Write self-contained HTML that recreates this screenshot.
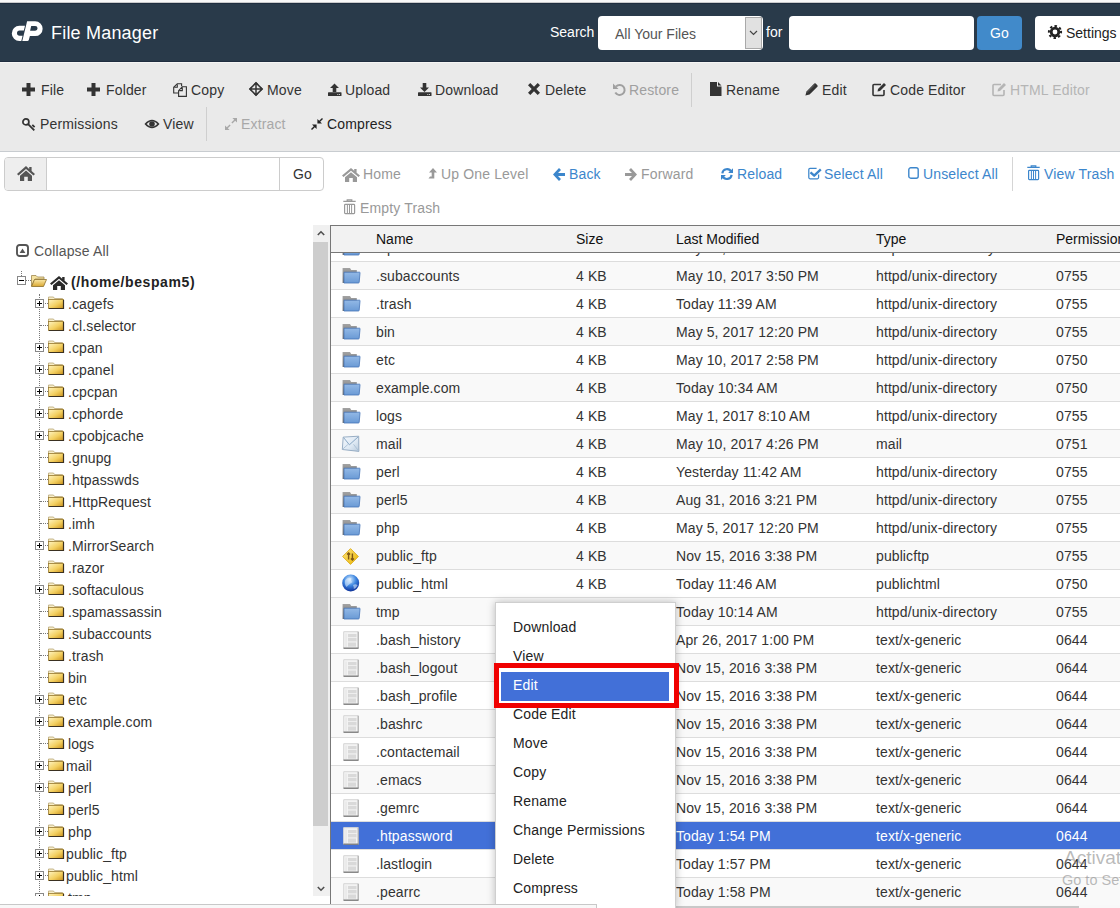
<!DOCTYPE html>
<html><head><meta charset="utf-8"><title>File Manager</title>
<style>
html,body{margin:0;padding:0;}
body{width:1120px;height:908px;overflow:hidden;position:relative;background:#fff;font-family:"Liberation Sans",sans-serif;}
.a{position:absolute;}
.t{position:absolute;white-space:nowrap;}
svg{overflow:visible;}
</style></head><body>
<div class="a" style="left:0px;top:0px;width:1120px;height:2px;background:#f8f8f8;"></div>
<div class="a" style="left:0px;top:2px;width:1120px;height:1px;background:#c9cacc;"></div>
<div class="a" style="left:0px;top:3px;width:1120px;height:59px;background:#293a4a;"></div>
<div class="a" style="left:0px;top:3px;width:1120px;height:1px;background:#1f2d3f;"></div>
<div class="a" style="left:0px;top:61px;width:1120px;height:1px;background:#1f2d3f;"></div>
<div class="a" style="left:0px;top:62px;width:1120px;height:1px;background:#f5f5f4;"></div>
<svg class="a" style="left:0px;top:0px;" width="60" height="60" viewBox="0 0 60 60"><path fill="#fff" d="M25 25.8 L19.4 25.8 A7.6 7.6 0 0 0 19.4 41 L21.3 41 L22.6 35.7 L19.6 35.7 A2.6 2.6 0 0 1 19.6 30.5 L23.85 30.5 Z"/><path fill="#fff" fill-rule="evenodd" d="M22.3 41 L27.1 21.2 L35.2 21.2 A7.45 7.45 0 0 1 35.2 36.1 L29.9 36.1 L28.8 40 Q28.4 41 27.4 41 Z M31.2 26 L35.2 26 A2.35 2.35 0 0 1 35.2 30.7 L30.1 30.7 Z"/></svg>
<div class="t " style="left:51px;top:24.0px;font-size:18px;line-height:18px;color:#fff;font-weight:normal;letter-spacing:0.2px;">File Manager</div>
<div class="t " style="left:550px;top:25.0px;font-size:14px;line-height:14px;color:#fff;font-weight:normal;">Search</div>
<div class="a" style="left:598px;top:16px;width:165px;height:34px;background:#fff;border-radius:4px;"></div>
<div class="t " style="left:615px;top:27.0px;font-size:14px;line-height:14px;color:#555;font-weight:normal;">All Your Files</div>
<div class="a" style="left:745px;top:17px;width:17px;height:32px;background:#e1e1e1;border:1px solid #a9a9a9;box-sizing:border-box;"></div>
<svg class="a" style="left:749px;top:30px;" width="9" height="6" viewBox="0 0 9 6"><path d="M1 1 L4.5 4.5 L8 1" fill="none" stroke="#444" stroke-width="1.2"/></svg>
<div class="t " style="left:766px;top:25.0px;font-size:14px;line-height:14px;color:#fff;font-weight:normal;">for</div>
<div class="a" style="left:789px;top:16px;width:185px;height:34px;background:#fff;border-radius:4px;"></div>
<div class="a" style="left:977px;top:16px;width:45px;height:34px;background:#418aca;border-radius:4px;"></div>
<div class="t " style="left:990px;top:26.0px;font-size:14px;line-height:14px;color:#fff;font-weight:normal;">Go</div>
<div class="a" style="left:1035px;top:16px;width:100px;height:34px;background:#fff;border-radius:4px;"></div>
<svg class="a" style="left:1048px;top:25px;" width="14" height="14" viewBox="0 0 14 14"><circle cx="7" cy="7" r="5.2" fill="#222"/><circle cx="7" cy="7" r="6.1" fill="none" stroke="#222" stroke-width="2" stroke-dasharray="2.4 2.39" transform="rotate(-11 7 7)"/><circle cx="7" cy="7" r="2.4" fill="#fff"/></svg>
<div class="t " style="left:1066px;top:26.0px;font-size:14px;line-height:14px;color:#222;font-weight:normal;">Settings</div>
<div class="a" style="left:0px;top:63px;width:1120px;height:88px;background:#eaeaea;"></div>
<div class="a" style="left:0px;top:151px;width:1120px;height:1px;background:#c8ccd0;"></div>
<svg class="a" style="left:22px;top:83px;" width="13" height="13" viewBox="0 0 13 13"><path d="M4.5 0h4v4.5h4.5v4h-4.5v4.5h-4v-4.5h-4.5v-4h4.5z" fill="#333"/></svg>
<div class="t " style="left:41px;top:83.0px;font-size:14px;line-height:14px;color:#333;font-weight:normal;letter-spacing:0.15px;">File</div>
<svg class="a" style="left:87px;top:83px;" width="13" height="13" viewBox="0 0 13 13"><path d="M4.5 0h4v4.5h4.5v4h-4.5v4.5h-4v-4.5h-4.5v-4h4.5z" fill="#333"/></svg>
<div class="t " style="left:106px;top:83.0px;font-size:14px;line-height:14px;color:#333;font-weight:normal;letter-spacing:0.15px;">Folder</div>
<svg class="a" style="left:173px;top:83px;" width="14" height="14" viewBox="0 0 14 14"><path d="M5.2 10 H0.7 V4.3 L4.3 0.7 H8.6 V3.3 M1.5 4.3 H4.3 V1.5" fill="none" stroke="#333" stroke-width="1.1"/><path d="M5.6 13.4 V7.6 L9.3 3.7 H13.4 V13.4 Z M6.4 7.6 H9.3 V4.5" fill="none" stroke="#333" stroke-width="1.1"/></svg>
<div class="t " style="left:191px;top:83.0px;font-size:14px;line-height:14px;color:#333;font-weight:normal;letter-spacing:0.15px;">Copy</div>
<svg class="a" style="left:249px;top:82px;" width="14" height="14" viewBox="0 0 14 14"><path d="M7 0.9 L13.1 7 L7 13.1 L0.9 7 Z" fill="none" stroke="#333" stroke-width="1.5"/><path d="M7 1 V13 M1 7 H13" stroke="#333" stroke-width="1.5"/><path d="M7 0 L9.6 2.6 H4.4 Z M7 14 L9.6 11.4 H4.4 Z M0 7 L2.6 4.4 V9.6 Z M14 7 L11.4 4.4 V9.6 Z" fill="#333"/></svg>
<div class="t " style="left:267px;top:83.0px;font-size:14px;line-height:14px;color:#333;font-weight:normal;letter-spacing:0.15px;">Move</div>
<svg class="a" style="left:328px;top:83px;" width="13" height="13" viewBox="0 0 13 13"><path d="M6.5 0.5 L11 5 H8.3 V9 H4.7 V5 H2 Z" fill="#333"/><rect x="0" y="9.2" width="13.5" height="3.8" rx="0.6" fill="#333"/><rect x="9.3" y="11" width="1" height="1" fill="#ccc"/><rect x="11" y="11" width="1" height="1" fill="#ccc"/></svg>
<div class="t " style="left:345px;top:83.0px;font-size:14px;line-height:14px;color:#333;font-weight:normal;letter-spacing:0.15px;">Upload</div>
<svg class="a" style="left:418px;top:83px;" width="13" height="13" viewBox="0 0 13 13"><path d="M4.7 0 H8.3 V4.5 H11 L6.5 9 L2 4.5 H4.7 Z" fill="#333"/><rect x="0" y="9.2" width="13.5" height="3.8" rx="0.6" fill="#333"/><rect x="9.3" y="11" width="1" height="1" fill="#ccc"/><rect x="11" y="11" width="1" height="1" fill="#ccc"/></svg>
<div class="t " style="left:435px;top:83.0px;font-size:14px;line-height:14px;color:#333;font-weight:normal;letter-spacing:0.15px;">Download</div>
<svg class="a" style="left:528px;top:83px;" width="12" height="12" viewBox="0 0 12 12"><path d="M2.3 0 L6 3.7 L9.7 0 L12 2.3 L8.3 6 L12 9.7 L9.7 12 L6 8.3 L2.3 12 L0 9.7 L3.7 6 L0 2.3 Z" fill="#333"/></svg>
<div class="t " style="left:545px;top:83.0px;font-size:14px;line-height:14px;color:#333;font-weight:normal;letter-spacing:0.15px;">Delete</div>
<svg class="a" style="left:613px;top:83px;" width="13" height="13" viewBox="0 0 13 13"><path d="M3 3.5 A5 5 0 1 1 2.3 9.5" fill="none" stroke="#a0a0a0" stroke-width="2"/><path d="M0 0.5 V6 H5.5 Z" fill="#a0a0a0"/></svg>
<div class="t " style="left:629px;top:83.0px;font-size:14px;line-height:14px;color:#a0a0a0;font-weight:normal;letter-spacing:0.15px;">Restore</div>
<div class="a" style="left:691px;top:73px;width:1px;height:34px;background:#cfcfcf;"></div>
<svg class="a" style="left:710px;top:82px;" width="12" height="14" viewBox="0 0 12 14"><path d="M0 0 H7 V4.5 H11.5 V14 H0 Z M8 0 L11.5 3.5 H8 Z" fill="#333"/></svg>
<div class="t " style="left:726px;top:83.0px;font-size:14px;line-height:14px;color:#333;font-weight:normal;letter-spacing:0.15px;">Rename</div>
<svg class="a" style="left:805px;top:83px;" width="13" height="13" viewBox="0 0 13 13"><path d="M9.3 0.6 Q10 0 10.7 0.6 L12.4 2.3 Q13 3 12.4 3.7 L4.6 11.5 L0.4 12.6 L1.5 8.4 Z" fill="#333"/><path d="M2.2 9.2 L9.6 1.8" stroke="#888" stroke-width="0.6"/></svg>
<div class="t " style="left:822px;top:83.0px;font-size:14px;line-height:14px;color:#333;font-weight:normal;letter-spacing:0.15px;">Edit</div>
<svg class="a" style="left:872px;top:83px;" width="14" height="13" viewBox="0 0 14 13"><path d="M9 1.5 H2 Q1 1.5 1 2.5 V11.5 Q1 12.5 2 12.5 H11 Q12 12.5 12 11.5 V7" fill="none" stroke="#333" stroke-width="1.6"/><path d="M12 0 L14 2 L8 8 L5.5 8.5 L6 6 Z" fill="#333"/></svg>
<div class="t " style="left:890px;top:83.0px;font-size:14px;line-height:14px;color:#333;font-weight:normal;letter-spacing:0.15px;">Code Editor</div>
<svg class="a" style="left:992px;top:83px;" width="14" height="13" viewBox="0 0 14 13"><path d="M9 1.5 H2 Q1 1.5 1 2.5 V11.5 Q1 12.5 2 12.5 H11 Q12 12.5 12 11.5 V7" fill="none" stroke="#b5b5b5" stroke-width="1.6"/><path d="M12 0 L14 2 L8 8 L5.5 8.5 L6 6 Z" fill="#b5b5b5"/></svg>
<div class="t " style="left:1010px;top:83.0px;font-size:14px;line-height:14px;color:#b5b5b5;font-weight:normal;letter-spacing:0.15px;">HTML Editor</div>
<svg class="a" style="left:22px;top:118px;" width="14" height="14" viewBox="0 0 14 14"><circle cx="3.9" cy="3.9" r="3" fill="none" stroke="#333" stroke-width="1.7"/><path d="M6.1 6.1 L12.3 12.3 M10.3 6.8 L12.6 9.1" stroke="#333" stroke-width="1.8" fill="none"/><circle cx="3.4" cy="4.4" r="0.9" fill="#fff"/></svg>
<div class="t " style="left:40px;top:117.0px;font-size:14px;line-height:14px;color:#333;font-weight:normal;letter-spacing:0.15px;">Permissions</div>
<svg class="a" style="left:145px;top:119px;" width="14" height="10" viewBox="0 0 14 10"><path d="M0.5 5 Q7 -2 13.5 5 Q7 12 0.5 5 Z" fill="none" stroke="#333" stroke-width="1.5"/><circle cx="7" cy="5" r="2.8" fill="#333"/></svg>
<div class="t " style="left:163px;top:117.0px;font-size:14px;line-height:14px;color:#333;font-weight:normal;letter-spacing:0.15px;">View</div>
<div class="a" style="left:206px;top:107px;width:1px;height:34px;background:#cfcfcf;"></div>
<svg class="a" style="left:225px;top:118px;" width="12" height="12" viewBox="0 0 12 12"><path d="M12 0 V4.6 L10.2 2.8 L7.4 5.6 L6.4 4.6 L9.2 1.8 L7.4 0 Z M0 12 V7.4 L1.8 9.2 L4.6 6.4 L5.6 7.4 L2.8 10.2 L4.6 12 Z" fill="#a8a8a8"/></svg>
<div class="t " style="left:241px;top:117.0px;font-size:14px;line-height:14px;color:#a8a8a8;font-weight:normal;letter-spacing:0.15px;">Extract</div>
<svg class="a" style="left:311px;top:118px;" width="12" height="12" viewBox="0 0 12 12"><path d="M11 0 L12 1 L9.2 3.8 L11 5.6 H6.4 V1 L8.2 2.8 Z M1 12 L0 11 L2.8 8.2 L1 6.4 H5.6 V11 L3.8 9.2 Z" fill="#222"/></svg>
<div class="t " style="left:327px;top:117.0px;font-size:14px;line-height:14px;color:#222;font-weight:normal;letter-spacing:0.15px;">Compress</div>
<div class="a" style="left:4px;top:157px;width:320px;height:34px;background:#fff;border:1px solid #ccc;border-radius:4px;box-sizing:border-box;"></div>
<div class="a" style="left:5px;top:158px;width:42px;height:32px;background:#eee;border-radius:3px 0 0 3px;"></div>
<div class="a" style="left:46px;top:158px;width:1px;height:32px;background:#ccc;"></div>
<svg class="a" style="left:17px;top:166px;" width="18" height="15" viewBox="0 0 18 15"><path d="M9 0 L0 8 L1.5 9.6 L9 3 L16.5 9.6 L18 8 L14.6 5 V1 H12.2 V2.9 Z" fill="#555"/><path d="M3 9.8 L9 4.5 L15 9.8 V15 H10.8 V10.8 H7.2 V15 H3 Z" fill="#555"/></svg>
<div class="a" style="left:279px;top:158px;width:1px;height:32px;background:#ccc;"></div>
<div class="t " style="left:293px;top:167.0px;font-size:14px;line-height:14px;color:#333;font-weight:normal;">Go</div>
<svg class="a" style="left:342px;top:168px" width="18" height="14" viewBox="0 0 18 15" preserveAspectRatio="none"><path d="M9 0 L0 8 L1.5 9.6 L9 3 L16.5 9.6 L18 8 L14.6 5 V1 H12.2 V2.9 Z" fill="#999"/><path d="M3 9.8 L9 4.5 L15 9.8 V15 H10.8 V10.8 H7.2 V15 H3 Z" fill="#999"/></svg>
<div class="t " style="left:363px;top:167.0px;font-size:14px;line-height:14px;color:#999;font-weight:normal;letter-spacing:0.15px;">Home</div>
<svg class="a" style="left:428px;top:168px;" width="10" height="11" viewBox="0 0 10 11"><path d="M5 0 L9 4.5 H6.3 V10.5 H0.5 L2 8.5 H3.7 V4.5 H1 Z" fill="#999"/></svg>
<div class="t " style="left:441px;top:167.0px;font-size:14px;line-height:14px;color:#999;font-weight:normal;letter-spacing:0.15px;">Up One Level</div>
<svg class="a" style="left:553px;top:168px;" width="12" height="13" viewBox="0 0 12 13"><path d="M6 0 L8 2 L5 5 H12 V8 H5 L8 11 L6 13 L0 6.5 Z" fill="#3c86cc"/></svg>
<div class="t " style="left:569px;top:167.0px;font-size:14px;line-height:14px;color:#3c86cc;font-weight:normal;letter-spacing:0.15px;">Back</div>
<svg class="a" style="left:625px;top:168px;" width="12" height="13" viewBox="0 0 12 13"><path d="M6 0 L4 2 L7 5 H0 V8 H7 L4 11 L6 13 L12 6.5 Z" fill="#999"/></svg>
<div class="t " style="left:641px;top:167.0px;font-size:14px;line-height:14px;color:#999;font-weight:normal;letter-spacing:0.15px;">Forward</div>
<svg class="a" style="left:720px;top:167px;" width="14" height="14" viewBox="0 0 14 14"><path d="M2.3 6.4 A4.7 4.7 0 0 1 11.2 4.8" fill="none" stroke="#3c86cc" stroke-width="2.1"/><polygon points="13,1.2 13,6.1 8.2,6.1" fill="#3c86cc"/><path d="M11.6 7.8 A4.7 4.7 0 0 1 2.7 9.3" fill="none" stroke="#3c86cc" stroke-width="2.1"/><polygon points="1,13 1,8.1 5.8,8.1" fill="#3c86cc"/></svg>
<div class="t " style="left:737px;top:167.0px;font-size:14px;line-height:14px;color:#3c86cc;font-weight:normal;letter-spacing:0.15px;">Reload</div>
<svg class="a" style="left:808px;top:167px;" width="14" height="13" viewBox="0 0 14 13"><path d="M8.6 1.4 H2 Q0.8 1.4 0.8 2.6 V10.6 Q0.8 11.8 2 11.8 H9.4 Q10.6 11.8 10.6 10.6 V7.6" fill="none" stroke="#3c86cc" stroke-width="1.25"/><path d="M2.5 5.3 L6.2 8.7 L12.8 2.3" fill="none" stroke="#3c86cc" stroke-width="2.3" stroke-linejoin="round"/></svg>
<div class="t " style="left:824px;top:167.0px;font-size:14px;line-height:14px;color:#3c86cc;font-weight:normal;letter-spacing:0.15px;">Select All</div>
<svg class="a" style="left:908px;top:167px;" width="11" height="12" viewBox="0 0 11 12"><rect x="0.8" y="0.8" width="9.4" height="10.4" rx="2" fill="none" stroke="#3c86cc" stroke-width="1.4"/></svg>
<div class="t " style="left:923px;top:167.0px;font-size:14px;line-height:14px;color:#3c86cc;font-weight:normal;letter-spacing:0.15px;">Unselect All</div>
<div class="a" style="left:1012px;top:157px;width:1px;height:34px;background:#d5d5d5;"></div>
<svg class="a" style="left:1027px;top:165px;" width="13" height="15" viewBox="0 0 13 15"><path d="M0.3 2.4 H12.7 M4.2 2.2 V0.8 H8.8 V2.2" fill="none" stroke="#3c86cc" stroke-width="1.2"/><rect x="1.6" y="5.4" width="10" height="9.2" rx="0.8" fill="none" stroke="#3c86cc" stroke-width="1.2"/><path d="M4.4 6 V14 M6.5 6 V14 M8.6 6 V14" stroke="#3c86cc" stroke-width="1"/></svg>
<div class="t " style="left:1044px;top:167.0px;font-size:14px;line-height:14px;color:#3c86cc;font-weight:normal;letter-spacing:0.15px;">View Trash</div>
<svg class="a" style="left:343px;top:199px;" width="13" height="15" viewBox="0 0 13 15"><path d="M0.3 2.4 H12.7 M4.2 2.2 V0.8 H8.8 V2.2" fill="none" stroke="#999" stroke-width="1.2"/><rect x="1.6" y="5.4" width="10" height="9.2" rx="0.8" fill="none" stroke="#999" stroke-width="1.2"/><path d="M4.4 6 V14 M6.5 6 V14 M8.6 6 V14" stroke="#999" stroke-width="1"/></svg>
<div class="t " style="left:360px;top:201.0px;font-size:14px;line-height:14px;color:#999;font-weight:normal;letter-spacing:0.15px;">Empty Trash</div>
<div class="t " style="left:34px;top:244.0px;font-size:14px;line-height:14px;color:#555;font-weight:normal;letter-spacing:0.15px;">Collapse All</div>
<svg class="a" style="left:16px;top:244px;" width="13" height="13" viewBox="0 0 13 13"><rect x="1" y="1" width="11" height="11" rx="2.6" fill="none" stroke="#555" stroke-width="1.9"/><path d="M3.6 9 H9.4 L6.5 4.6 Z" fill="#555"/></svg>
<svg class="a" style="left:17px;top:276px;" width="9" height="9" viewBox="0 0 9 9"><rect x="0.5" y="0.5" width="8" height="8" fill="#fff" stroke="#888"/><path d="M2 4.5 H7" stroke="#000"/></svg>
<div class="a" style="left:21px;top:271px;width:1px;height:5px;border-left:1px dotted #777;"></div>
<div class="a" style="left:26px;top:280px;width:5px;height:1px;border-top:1px dotted #777;"></div>
<svg class="a" style="left:31px;top:274px;" width="16" height="13" viewBox="0 0 16 13"><defs><linearGradient id="fo" x1="0" y1="0" x2="0" y2="1"><stop offset="0" stop-color="#fbe9a8"/><stop offset="1" stop-color="#d9a730"/></linearGradient></defs><path d="M0.5 1.5 H5 L6.5 3 H13 V5 H4 L0.5 12 Z" fill="#f5e2a0" stroke="#a08850" stroke-width="0.8"/><path d="M3.5 5.5 H15.5 L12.5 12.5 H0.5 Z" fill="url(#fo)" stroke="#8a6d2a" stroke-width="0.8"/></svg>
<svg class="a" style="left:50px;top:276px" width="18" height="14" viewBox="0 0 18 15" preserveAspectRatio="none"><path d="M9 0 L0 8 L1.5 9.6 L9 3 L16.5 9.6 L18 8 L14.6 5 V1 H12.2 V2.9 Z" fill="#2a2a2a"/><path d="M3 9.8 L9 4.5 L15 9.8 V15 H10.8 V10.8 H7.2 V15 H3 Z" fill="#2a2a2a"/></svg>
<div class="t " style="left:71px;top:275.0px;font-size:14px;line-height:14px;color:#222;font-weight:bold;letter-spacing:0.6px;">(/home/bespam5)</div>
<div class="a" style="left:39px;top:294px;width:1px;height:602px;border-left:1px dotted #777;"></div>
<div class="a" style="left:40px;top:303px;width:8px;height:1px;border-top:1px dotted #777;"></div>
<svg class="a" style="left:35px;top:299px;" width="9" height="9" viewBox="0 0 9 9"><rect x="0.5" y="0.5" width="8" height="8" fill="#fff" stroke="#888"/><path d="M2 4.5 H7 M4.5 2 V7" stroke="#000"/></svg>
<svg class="a" style="left:48px;top:296px;" width="16" height="13" viewBox="0 0 16 13"><defs><linearGradient id="fy" x1="0" y1="0" x2="1" y2="1"><stop offset="0" stop-color="#fff4c0"/><stop offset="0.55" stop-color="#f3cf5f"/><stop offset="1" stop-color="#c9901c"/></linearGradient></defs><path d="M0.5 1 H5.5 L6.5 2.5 H14.5 V4 H0.5 Z" fill="#f6edc8" stroke="#b9a676" stroke-width="0.8"/><rect x="0.5" y="3.5" width="15" height="9" fill="url(#fy)" stroke="#9a7a30" stroke-width="0.8"/><path d="M1 12.5 H15.5 V4" fill="none" stroke="#3a3020" stroke-width="1.2"/></svg>
<div class="t " style="left:68px;top:297.0px;font-size:14px;line-height:14px;color:#333;font-weight:normal;letter-spacing:0.1px;">.cagefs</div>
<div class="a" style="left:40px;top:325px;width:8px;height:1px;border-top:1px dotted #777;"></div>
<svg class="a" style="left:48px;top:318px;" width="16" height="13" viewBox="0 0 16 13"><defs><linearGradient id="fy" x1="0" y1="0" x2="1" y2="1"><stop offset="0" stop-color="#fff4c0"/><stop offset="0.55" stop-color="#f3cf5f"/><stop offset="1" stop-color="#c9901c"/></linearGradient></defs><path d="M0.5 1 H5.5 L6.5 2.5 H14.5 V4 H0.5 Z" fill="#f6edc8" stroke="#b9a676" stroke-width="0.8"/><rect x="0.5" y="3.5" width="15" height="9" fill="url(#fy)" stroke="#9a7a30" stroke-width="0.8"/><path d="M1 12.5 H15.5 V4" fill="none" stroke="#3a3020" stroke-width="1.2"/></svg>
<div class="t " style="left:68px;top:319.0px;font-size:14px;line-height:14px;color:#333;font-weight:normal;letter-spacing:0.1px;">.cl.selector</div>
<div class="a" style="left:40px;top:347px;width:8px;height:1px;border-top:1px dotted #777;"></div>
<svg class="a" style="left:35px;top:343px;" width="9" height="9" viewBox="0 0 9 9"><rect x="0.5" y="0.5" width="8" height="8" fill="#fff" stroke="#888"/><path d="M2 4.5 H7 M4.5 2 V7" stroke="#000"/></svg>
<svg class="a" style="left:48px;top:340px;" width="16" height="13" viewBox="0 0 16 13"><defs><linearGradient id="fy" x1="0" y1="0" x2="1" y2="1"><stop offset="0" stop-color="#fff4c0"/><stop offset="0.55" stop-color="#f3cf5f"/><stop offset="1" stop-color="#c9901c"/></linearGradient></defs><path d="M0.5 1 H5.5 L6.5 2.5 H14.5 V4 H0.5 Z" fill="#f6edc8" stroke="#b9a676" stroke-width="0.8"/><rect x="0.5" y="3.5" width="15" height="9" fill="url(#fy)" stroke="#9a7a30" stroke-width="0.8"/><path d="M1 12.5 H15.5 V4" fill="none" stroke="#3a3020" stroke-width="1.2"/></svg>
<div class="t " style="left:68px;top:341.0px;font-size:14px;line-height:14px;color:#333;font-weight:normal;letter-spacing:0.1px;">.cpan</div>
<div class="a" style="left:40px;top:369px;width:8px;height:1px;border-top:1px dotted #777;"></div>
<svg class="a" style="left:35px;top:365px;" width="9" height="9" viewBox="0 0 9 9"><rect x="0.5" y="0.5" width="8" height="8" fill="#fff" stroke="#888"/><path d="M2 4.5 H7 M4.5 2 V7" stroke="#000"/></svg>
<svg class="a" style="left:48px;top:362px;" width="16" height="13" viewBox="0 0 16 13"><defs><linearGradient id="fy" x1="0" y1="0" x2="1" y2="1"><stop offset="0" stop-color="#fff4c0"/><stop offset="0.55" stop-color="#f3cf5f"/><stop offset="1" stop-color="#c9901c"/></linearGradient></defs><path d="M0.5 1 H5.5 L6.5 2.5 H14.5 V4 H0.5 Z" fill="#f6edc8" stroke="#b9a676" stroke-width="0.8"/><rect x="0.5" y="3.5" width="15" height="9" fill="url(#fy)" stroke="#9a7a30" stroke-width="0.8"/><path d="M1 12.5 H15.5 V4" fill="none" stroke="#3a3020" stroke-width="1.2"/></svg>
<div class="t " style="left:68px;top:363.0px;font-size:14px;line-height:14px;color:#333;font-weight:normal;letter-spacing:0.1px;">.cpanel</div>
<div class="a" style="left:40px;top:391px;width:8px;height:1px;border-top:1px dotted #777;"></div>
<svg class="a" style="left:35px;top:387px;" width="9" height="9" viewBox="0 0 9 9"><rect x="0.5" y="0.5" width="8" height="8" fill="#fff" stroke="#888"/><path d="M2 4.5 H7 M4.5 2 V7" stroke="#000"/></svg>
<svg class="a" style="left:48px;top:384px;" width="16" height="13" viewBox="0 0 16 13"><defs><linearGradient id="fy" x1="0" y1="0" x2="1" y2="1"><stop offset="0" stop-color="#fff4c0"/><stop offset="0.55" stop-color="#f3cf5f"/><stop offset="1" stop-color="#c9901c"/></linearGradient></defs><path d="M0.5 1 H5.5 L6.5 2.5 H14.5 V4 H0.5 Z" fill="#f6edc8" stroke="#b9a676" stroke-width="0.8"/><rect x="0.5" y="3.5" width="15" height="9" fill="url(#fy)" stroke="#9a7a30" stroke-width="0.8"/><path d="M1 12.5 H15.5 V4" fill="none" stroke="#3a3020" stroke-width="1.2"/></svg>
<div class="t " style="left:68px;top:385.0px;font-size:14px;line-height:14px;color:#333;font-weight:normal;letter-spacing:0.1px;">.cpcpan</div>
<div class="a" style="left:40px;top:413px;width:8px;height:1px;border-top:1px dotted #777;"></div>
<svg class="a" style="left:35px;top:409px;" width="9" height="9" viewBox="0 0 9 9"><rect x="0.5" y="0.5" width="8" height="8" fill="#fff" stroke="#888"/><path d="M2 4.5 H7 M4.5 2 V7" stroke="#000"/></svg>
<svg class="a" style="left:48px;top:406px;" width="16" height="13" viewBox="0 0 16 13"><defs><linearGradient id="fy" x1="0" y1="0" x2="1" y2="1"><stop offset="0" stop-color="#fff4c0"/><stop offset="0.55" stop-color="#f3cf5f"/><stop offset="1" stop-color="#c9901c"/></linearGradient></defs><path d="M0.5 1 H5.5 L6.5 2.5 H14.5 V4 H0.5 Z" fill="#f6edc8" stroke="#b9a676" stroke-width="0.8"/><rect x="0.5" y="3.5" width="15" height="9" fill="url(#fy)" stroke="#9a7a30" stroke-width="0.8"/><path d="M1 12.5 H15.5 V4" fill="none" stroke="#3a3020" stroke-width="1.2"/></svg>
<div class="t " style="left:68px;top:407.0px;font-size:14px;line-height:14px;color:#333;font-weight:normal;letter-spacing:0.1px;">.cphorde</div>
<div class="a" style="left:40px;top:435px;width:8px;height:1px;border-top:1px dotted #777;"></div>
<svg class="a" style="left:35px;top:431px;" width="9" height="9" viewBox="0 0 9 9"><rect x="0.5" y="0.5" width="8" height="8" fill="#fff" stroke="#888"/><path d="M2 4.5 H7 M4.5 2 V7" stroke="#000"/></svg>
<svg class="a" style="left:48px;top:428px;" width="16" height="13" viewBox="0 0 16 13"><defs><linearGradient id="fy" x1="0" y1="0" x2="1" y2="1"><stop offset="0" stop-color="#fff4c0"/><stop offset="0.55" stop-color="#f3cf5f"/><stop offset="1" stop-color="#c9901c"/></linearGradient></defs><path d="M0.5 1 H5.5 L6.5 2.5 H14.5 V4 H0.5 Z" fill="#f6edc8" stroke="#b9a676" stroke-width="0.8"/><rect x="0.5" y="3.5" width="15" height="9" fill="url(#fy)" stroke="#9a7a30" stroke-width="0.8"/><path d="M1 12.5 H15.5 V4" fill="none" stroke="#3a3020" stroke-width="1.2"/></svg>
<div class="t " style="left:68px;top:429.0px;font-size:14px;line-height:14px;color:#333;font-weight:normal;letter-spacing:0.1px;">.cpobjcache</div>
<div class="a" style="left:40px;top:457px;width:8px;height:1px;border-top:1px dotted #777;"></div>
<svg class="a" style="left:48px;top:450px;" width="16" height="13" viewBox="0 0 16 13"><defs><linearGradient id="fy" x1="0" y1="0" x2="1" y2="1"><stop offset="0" stop-color="#fff4c0"/><stop offset="0.55" stop-color="#f3cf5f"/><stop offset="1" stop-color="#c9901c"/></linearGradient></defs><path d="M0.5 1 H5.5 L6.5 2.5 H14.5 V4 H0.5 Z" fill="#f6edc8" stroke="#b9a676" stroke-width="0.8"/><rect x="0.5" y="3.5" width="15" height="9" fill="url(#fy)" stroke="#9a7a30" stroke-width="0.8"/><path d="M1 12.5 H15.5 V4" fill="none" stroke="#3a3020" stroke-width="1.2"/></svg>
<div class="t " style="left:68px;top:451.0px;font-size:14px;line-height:14px;color:#333;font-weight:normal;letter-spacing:0.1px;">.gnupg</div>
<div class="a" style="left:40px;top:479px;width:8px;height:1px;border-top:1px dotted #777;"></div>
<svg class="a" style="left:48px;top:472px;" width="16" height="13" viewBox="0 0 16 13"><defs><linearGradient id="fy" x1="0" y1="0" x2="1" y2="1"><stop offset="0" stop-color="#fff4c0"/><stop offset="0.55" stop-color="#f3cf5f"/><stop offset="1" stop-color="#c9901c"/></linearGradient></defs><path d="M0.5 1 H5.5 L6.5 2.5 H14.5 V4 H0.5 Z" fill="#f6edc8" stroke="#b9a676" stroke-width="0.8"/><rect x="0.5" y="3.5" width="15" height="9" fill="url(#fy)" stroke="#9a7a30" stroke-width="0.8"/><path d="M1 12.5 H15.5 V4" fill="none" stroke="#3a3020" stroke-width="1.2"/></svg>
<div class="t " style="left:68px;top:473.0px;font-size:14px;line-height:14px;color:#333;font-weight:normal;letter-spacing:0.1px;">.htpasswds</div>
<div class="a" style="left:40px;top:501px;width:8px;height:1px;border-top:1px dotted #777;"></div>
<svg class="a" style="left:48px;top:494px;" width="16" height="13" viewBox="0 0 16 13"><defs><linearGradient id="fy" x1="0" y1="0" x2="1" y2="1"><stop offset="0" stop-color="#fff4c0"/><stop offset="0.55" stop-color="#f3cf5f"/><stop offset="1" stop-color="#c9901c"/></linearGradient></defs><path d="M0.5 1 H5.5 L6.5 2.5 H14.5 V4 H0.5 Z" fill="#f6edc8" stroke="#b9a676" stroke-width="0.8"/><rect x="0.5" y="3.5" width="15" height="9" fill="url(#fy)" stroke="#9a7a30" stroke-width="0.8"/><path d="M1 12.5 H15.5 V4" fill="none" stroke="#3a3020" stroke-width="1.2"/></svg>
<div class="t " style="left:68px;top:495.0px;font-size:14px;line-height:14px;color:#333;font-weight:normal;letter-spacing:0.1px;">.HttpRequest</div>
<div class="a" style="left:40px;top:523px;width:8px;height:1px;border-top:1px dotted #777;"></div>
<svg class="a" style="left:48px;top:516px;" width="16" height="13" viewBox="0 0 16 13"><defs><linearGradient id="fy" x1="0" y1="0" x2="1" y2="1"><stop offset="0" stop-color="#fff4c0"/><stop offset="0.55" stop-color="#f3cf5f"/><stop offset="1" stop-color="#c9901c"/></linearGradient></defs><path d="M0.5 1 H5.5 L6.5 2.5 H14.5 V4 H0.5 Z" fill="#f6edc8" stroke="#b9a676" stroke-width="0.8"/><rect x="0.5" y="3.5" width="15" height="9" fill="url(#fy)" stroke="#9a7a30" stroke-width="0.8"/><path d="M1 12.5 H15.5 V4" fill="none" stroke="#3a3020" stroke-width="1.2"/></svg>
<div class="t " style="left:68px;top:517.0px;font-size:14px;line-height:14px;color:#333;font-weight:normal;letter-spacing:0.1px;">.imh</div>
<div class="a" style="left:40px;top:545px;width:8px;height:1px;border-top:1px dotted #777;"></div>
<svg class="a" style="left:35px;top:541px;" width="9" height="9" viewBox="0 0 9 9"><rect x="0.5" y="0.5" width="8" height="8" fill="#fff" stroke="#888"/><path d="M2 4.5 H7 M4.5 2 V7" stroke="#000"/></svg>
<svg class="a" style="left:48px;top:538px;" width="16" height="13" viewBox="0 0 16 13"><defs><linearGradient id="fy" x1="0" y1="0" x2="1" y2="1"><stop offset="0" stop-color="#fff4c0"/><stop offset="0.55" stop-color="#f3cf5f"/><stop offset="1" stop-color="#c9901c"/></linearGradient></defs><path d="M0.5 1 H5.5 L6.5 2.5 H14.5 V4 H0.5 Z" fill="#f6edc8" stroke="#b9a676" stroke-width="0.8"/><rect x="0.5" y="3.5" width="15" height="9" fill="url(#fy)" stroke="#9a7a30" stroke-width="0.8"/><path d="M1 12.5 H15.5 V4" fill="none" stroke="#3a3020" stroke-width="1.2"/></svg>
<div class="t " style="left:68px;top:539.0px;font-size:14px;line-height:14px;color:#333;font-weight:normal;letter-spacing:0.1px;">.MirrorSearch</div>
<div class="a" style="left:40px;top:567px;width:8px;height:1px;border-top:1px dotted #777;"></div>
<svg class="a" style="left:48px;top:560px;" width="16" height="13" viewBox="0 0 16 13"><defs><linearGradient id="fy" x1="0" y1="0" x2="1" y2="1"><stop offset="0" stop-color="#fff4c0"/><stop offset="0.55" stop-color="#f3cf5f"/><stop offset="1" stop-color="#c9901c"/></linearGradient></defs><path d="M0.5 1 H5.5 L6.5 2.5 H14.5 V4 H0.5 Z" fill="#f6edc8" stroke="#b9a676" stroke-width="0.8"/><rect x="0.5" y="3.5" width="15" height="9" fill="url(#fy)" stroke="#9a7a30" stroke-width="0.8"/><path d="M1 12.5 H15.5 V4" fill="none" stroke="#3a3020" stroke-width="1.2"/></svg>
<div class="t " style="left:68px;top:561.0px;font-size:14px;line-height:14px;color:#333;font-weight:normal;letter-spacing:0.1px;">.razor</div>
<div class="a" style="left:40px;top:589px;width:8px;height:1px;border-top:1px dotted #777;"></div>
<svg class="a" style="left:35px;top:585px;" width="9" height="9" viewBox="0 0 9 9"><rect x="0.5" y="0.5" width="8" height="8" fill="#fff" stroke="#888"/><path d="M2 4.5 H7 M4.5 2 V7" stroke="#000"/></svg>
<svg class="a" style="left:48px;top:582px;" width="16" height="13" viewBox="0 0 16 13"><defs><linearGradient id="fy" x1="0" y1="0" x2="1" y2="1"><stop offset="0" stop-color="#fff4c0"/><stop offset="0.55" stop-color="#f3cf5f"/><stop offset="1" stop-color="#c9901c"/></linearGradient></defs><path d="M0.5 1 H5.5 L6.5 2.5 H14.5 V4 H0.5 Z" fill="#f6edc8" stroke="#b9a676" stroke-width="0.8"/><rect x="0.5" y="3.5" width="15" height="9" fill="url(#fy)" stroke="#9a7a30" stroke-width="0.8"/><path d="M1 12.5 H15.5 V4" fill="none" stroke="#3a3020" stroke-width="1.2"/></svg>
<div class="t " style="left:68px;top:583.0px;font-size:14px;line-height:14px;color:#333;font-weight:normal;letter-spacing:0.1px;">.softaculous</div>
<div class="a" style="left:40px;top:611px;width:8px;height:1px;border-top:1px dotted #777;"></div>
<svg class="a" style="left:48px;top:604px;" width="16" height="13" viewBox="0 0 16 13"><defs><linearGradient id="fy" x1="0" y1="0" x2="1" y2="1"><stop offset="0" stop-color="#fff4c0"/><stop offset="0.55" stop-color="#f3cf5f"/><stop offset="1" stop-color="#c9901c"/></linearGradient></defs><path d="M0.5 1 H5.5 L6.5 2.5 H14.5 V4 H0.5 Z" fill="#f6edc8" stroke="#b9a676" stroke-width="0.8"/><rect x="0.5" y="3.5" width="15" height="9" fill="url(#fy)" stroke="#9a7a30" stroke-width="0.8"/><path d="M1 12.5 H15.5 V4" fill="none" stroke="#3a3020" stroke-width="1.2"/></svg>
<div class="t " style="left:68px;top:605.0px;font-size:14px;line-height:14px;color:#333;font-weight:normal;letter-spacing:0.1px;">.spamassassin</div>
<div class="a" style="left:40px;top:633px;width:8px;height:1px;border-top:1px dotted #777;"></div>
<svg class="a" style="left:48px;top:626px;" width="16" height="13" viewBox="0 0 16 13"><defs><linearGradient id="fy" x1="0" y1="0" x2="1" y2="1"><stop offset="0" stop-color="#fff4c0"/><stop offset="0.55" stop-color="#f3cf5f"/><stop offset="1" stop-color="#c9901c"/></linearGradient></defs><path d="M0.5 1 H5.5 L6.5 2.5 H14.5 V4 H0.5 Z" fill="#f6edc8" stroke="#b9a676" stroke-width="0.8"/><rect x="0.5" y="3.5" width="15" height="9" fill="url(#fy)" stroke="#9a7a30" stroke-width="0.8"/><path d="M1 12.5 H15.5 V4" fill="none" stroke="#3a3020" stroke-width="1.2"/></svg>
<div class="t " style="left:68px;top:627.0px;font-size:14px;line-height:14px;color:#333;font-weight:normal;letter-spacing:0.1px;">.subaccounts</div>
<div class="a" style="left:40px;top:655px;width:8px;height:1px;border-top:1px dotted #777;"></div>
<svg class="a" style="left:48px;top:648px;" width="16" height="13" viewBox="0 0 16 13"><defs><linearGradient id="fy" x1="0" y1="0" x2="1" y2="1"><stop offset="0" stop-color="#fff4c0"/><stop offset="0.55" stop-color="#f3cf5f"/><stop offset="1" stop-color="#c9901c"/></linearGradient></defs><path d="M0.5 1 H5.5 L6.5 2.5 H14.5 V4 H0.5 Z" fill="#f6edc8" stroke="#b9a676" stroke-width="0.8"/><rect x="0.5" y="3.5" width="15" height="9" fill="url(#fy)" stroke="#9a7a30" stroke-width="0.8"/><path d="M1 12.5 H15.5 V4" fill="none" stroke="#3a3020" stroke-width="1.2"/></svg>
<div class="t " style="left:68px;top:649.0px;font-size:14px;line-height:14px;color:#333;font-weight:normal;letter-spacing:0.1px;">.trash</div>
<div class="a" style="left:40px;top:677px;width:8px;height:1px;border-top:1px dotted #777;"></div>
<svg class="a" style="left:48px;top:670px;" width="16" height="13" viewBox="0 0 16 13"><defs><linearGradient id="fy" x1="0" y1="0" x2="1" y2="1"><stop offset="0" stop-color="#fff4c0"/><stop offset="0.55" stop-color="#f3cf5f"/><stop offset="1" stop-color="#c9901c"/></linearGradient></defs><path d="M0.5 1 H5.5 L6.5 2.5 H14.5 V4 H0.5 Z" fill="#f6edc8" stroke="#b9a676" stroke-width="0.8"/><rect x="0.5" y="3.5" width="15" height="9" fill="url(#fy)" stroke="#9a7a30" stroke-width="0.8"/><path d="M1 12.5 H15.5 V4" fill="none" stroke="#3a3020" stroke-width="1.2"/></svg>
<div class="t " style="left:68px;top:671.0px;font-size:14px;line-height:14px;color:#333;font-weight:normal;letter-spacing:0.1px;">bin</div>
<div class="a" style="left:40px;top:699px;width:8px;height:1px;border-top:1px dotted #777;"></div>
<svg class="a" style="left:35px;top:695px;" width="9" height="9" viewBox="0 0 9 9"><rect x="0.5" y="0.5" width="8" height="8" fill="#fff" stroke="#888"/><path d="M2 4.5 H7 M4.5 2 V7" stroke="#000"/></svg>
<svg class="a" style="left:48px;top:692px;" width="16" height="13" viewBox="0 0 16 13"><defs><linearGradient id="fy" x1="0" y1="0" x2="1" y2="1"><stop offset="0" stop-color="#fff4c0"/><stop offset="0.55" stop-color="#f3cf5f"/><stop offset="1" stop-color="#c9901c"/></linearGradient></defs><path d="M0.5 1 H5.5 L6.5 2.5 H14.5 V4 H0.5 Z" fill="#f6edc8" stroke="#b9a676" stroke-width="0.8"/><rect x="0.5" y="3.5" width="15" height="9" fill="url(#fy)" stroke="#9a7a30" stroke-width="0.8"/><path d="M1 12.5 H15.5 V4" fill="none" stroke="#3a3020" stroke-width="1.2"/></svg>
<div class="t " style="left:68px;top:693.0px;font-size:14px;line-height:14px;color:#333;font-weight:normal;letter-spacing:0.1px;">etc</div>
<div class="a" style="left:40px;top:721px;width:8px;height:1px;border-top:1px dotted #777;"></div>
<svg class="a" style="left:35px;top:717px;" width="9" height="9" viewBox="0 0 9 9"><rect x="0.5" y="0.5" width="8" height="8" fill="#fff" stroke="#888"/><path d="M2 4.5 H7 M4.5 2 V7" stroke="#000"/></svg>
<svg class="a" style="left:48px;top:714px;" width="16" height="13" viewBox="0 0 16 13"><defs><linearGradient id="fy" x1="0" y1="0" x2="1" y2="1"><stop offset="0" stop-color="#fff4c0"/><stop offset="0.55" stop-color="#f3cf5f"/><stop offset="1" stop-color="#c9901c"/></linearGradient></defs><path d="M0.5 1 H5.5 L6.5 2.5 H14.5 V4 H0.5 Z" fill="#f6edc8" stroke="#b9a676" stroke-width="0.8"/><rect x="0.5" y="3.5" width="15" height="9" fill="url(#fy)" stroke="#9a7a30" stroke-width="0.8"/><path d="M1 12.5 H15.5 V4" fill="none" stroke="#3a3020" stroke-width="1.2"/></svg>
<div class="t " style="left:68px;top:715.0px;font-size:14px;line-height:14px;color:#333;font-weight:normal;letter-spacing:0.1px;">example.com</div>
<div class="a" style="left:40px;top:743px;width:8px;height:1px;border-top:1px dotted #777;"></div>
<svg class="a" style="left:48px;top:736px;" width="16" height="13" viewBox="0 0 16 13"><defs><linearGradient id="fy" x1="0" y1="0" x2="1" y2="1"><stop offset="0" stop-color="#fff4c0"/><stop offset="0.55" stop-color="#f3cf5f"/><stop offset="1" stop-color="#c9901c"/></linearGradient></defs><path d="M0.5 1 H5.5 L6.5 2.5 H14.5 V4 H0.5 Z" fill="#f6edc8" stroke="#b9a676" stroke-width="0.8"/><rect x="0.5" y="3.5" width="15" height="9" fill="url(#fy)" stroke="#9a7a30" stroke-width="0.8"/><path d="M1 12.5 H15.5 V4" fill="none" stroke="#3a3020" stroke-width="1.2"/></svg>
<div class="t " style="left:68px;top:737.0px;font-size:14px;line-height:14px;color:#333;font-weight:normal;letter-spacing:0.1px;">logs</div>
<div class="a" style="left:40px;top:765px;width:8px;height:1px;border-top:1px dotted #777;"></div>
<svg class="a" style="left:35px;top:761px;" width="9" height="9" viewBox="0 0 9 9"><rect x="0.5" y="0.5" width="8" height="8" fill="#fff" stroke="#888"/><path d="M2 4.5 H7 M4.5 2 V7" stroke="#000"/></svg>
<svg class="a" style="left:48px;top:758px;" width="16" height="13" viewBox="0 0 16 13"><defs><linearGradient id="fy" x1="0" y1="0" x2="1" y2="1"><stop offset="0" stop-color="#fff4c0"/><stop offset="0.55" stop-color="#f3cf5f"/><stop offset="1" stop-color="#c9901c"/></linearGradient></defs><path d="M0.5 1 H5.5 L6.5 2.5 H14.5 V4 H0.5 Z" fill="#f6edc8" stroke="#b9a676" stroke-width="0.8"/><rect x="0.5" y="3.5" width="15" height="9" fill="url(#fy)" stroke="#9a7a30" stroke-width="0.8"/><path d="M1 12.5 H15.5 V4" fill="none" stroke="#3a3020" stroke-width="1.2"/></svg>
<div class="t " style="left:66px;top:759.0px;font-size:14px;line-height:14px;color:#333;font-weight:normal;letter-spacing:0.1px;">mail</div>
<div class="a" style="left:40px;top:787px;width:8px;height:1px;border-top:1px dotted #777;"></div>
<svg class="a" style="left:35px;top:783px;" width="9" height="9" viewBox="0 0 9 9"><rect x="0.5" y="0.5" width="8" height="8" fill="#fff" stroke="#888"/><path d="M2 4.5 H7 M4.5 2 V7" stroke="#000"/></svg>
<svg class="a" style="left:48px;top:780px;" width="16" height="13" viewBox="0 0 16 13"><defs><linearGradient id="fy" x1="0" y1="0" x2="1" y2="1"><stop offset="0" stop-color="#fff4c0"/><stop offset="0.55" stop-color="#f3cf5f"/><stop offset="1" stop-color="#c9901c"/></linearGradient></defs><path d="M0.5 1 H5.5 L6.5 2.5 H14.5 V4 H0.5 Z" fill="#f6edc8" stroke="#b9a676" stroke-width="0.8"/><rect x="0.5" y="3.5" width="15" height="9" fill="url(#fy)" stroke="#9a7a30" stroke-width="0.8"/><path d="M1 12.5 H15.5 V4" fill="none" stroke="#3a3020" stroke-width="1.2"/></svg>
<div class="t " style="left:68px;top:781.0px;font-size:14px;line-height:14px;color:#333;font-weight:normal;letter-spacing:0.1px;">perl</div>
<div class="a" style="left:40px;top:809px;width:8px;height:1px;border-top:1px dotted #777;"></div>
<svg class="a" style="left:48px;top:802px;" width="16" height="13" viewBox="0 0 16 13"><defs><linearGradient id="fy" x1="0" y1="0" x2="1" y2="1"><stop offset="0" stop-color="#fff4c0"/><stop offset="0.55" stop-color="#f3cf5f"/><stop offset="1" stop-color="#c9901c"/></linearGradient></defs><path d="M0.5 1 H5.5 L6.5 2.5 H14.5 V4 H0.5 Z" fill="#f6edc8" stroke="#b9a676" stroke-width="0.8"/><rect x="0.5" y="3.5" width="15" height="9" fill="url(#fy)" stroke="#9a7a30" stroke-width="0.8"/><path d="M1 12.5 H15.5 V4" fill="none" stroke="#3a3020" stroke-width="1.2"/></svg>
<div class="t " style="left:68px;top:803.0px;font-size:14px;line-height:14px;color:#333;font-weight:normal;letter-spacing:0.1px;">perl5</div>
<div class="a" style="left:40px;top:831px;width:8px;height:1px;border-top:1px dotted #777;"></div>
<svg class="a" style="left:35px;top:827px;" width="9" height="9" viewBox="0 0 9 9"><rect x="0.5" y="0.5" width="8" height="8" fill="#fff" stroke="#888"/><path d="M2 4.5 H7 M4.5 2 V7" stroke="#000"/></svg>
<svg class="a" style="left:48px;top:824px;" width="16" height="13" viewBox="0 0 16 13"><defs><linearGradient id="fy" x1="0" y1="0" x2="1" y2="1"><stop offset="0" stop-color="#fff4c0"/><stop offset="0.55" stop-color="#f3cf5f"/><stop offset="1" stop-color="#c9901c"/></linearGradient></defs><path d="M0.5 1 H5.5 L6.5 2.5 H14.5 V4 H0.5 Z" fill="#f6edc8" stroke="#b9a676" stroke-width="0.8"/><rect x="0.5" y="3.5" width="15" height="9" fill="url(#fy)" stroke="#9a7a30" stroke-width="0.8"/><path d="M1 12.5 H15.5 V4" fill="none" stroke="#3a3020" stroke-width="1.2"/></svg>
<div class="t " style="left:68px;top:825.0px;font-size:14px;line-height:14px;color:#333;font-weight:normal;letter-spacing:0.1px;">php</div>
<div class="a" style="left:40px;top:853px;width:8px;height:1px;border-top:1px dotted #777;"></div>
<svg class="a" style="left:35px;top:849px;" width="9" height="9" viewBox="0 0 9 9"><rect x="0.5" y="0.5" width="8" height="8" fill="#fff" stroke="#888"/><path d="M2 4.5 H7 M4.5 2 V7" stroke="#000"/></svg>
<svg class="a" style="left:48px;top:846px;" width="16" height="13" viewBox="0 0 16 13"><defs><linearGradient id="fy" x1="0" y1="0" x2="1" y2="1"><stop offset="0" stop-color="#fff4c0"/><stop offset="0.55" stop-color="#f3cf5f"/><stop offset="1" stop-color="#c9901c"/></linearGradient></defs><path d="M0.5 1 H5.5 L6.5 2.5 H14.5 V4 H0.5 Z" fill="#f6edc8" stroke="#b9a676" stroke-width="0.8"/><rect x="0.5" y="3.5" width="15" height="9" fill="url(#fy)" stroke="#9a7a30" stroke-width="0.8"/><path d="M1 12.5 H15.5 V4" fill="none" stroke="#3a3020" stroke-width="1.2"/></svg>
<div class="t " style="left:66px;top:847.0px;font-size:14px;line-height:14px;color:#333;font-weight:normal;letter-spacing:0.1px;">public_ftp</div>
<div class="a" style="left:40px;top:875px;width:8px;height:1px;border-top:1px dotted #777;"></div>
<svg class="a" style="left:35px;top:871px;" width="9" height="9" viewBox="0 0 9 9"><rect x="0.5" y="0.5" width="8" height="8" fill="#fff" stroke="#888"/><path d="M2 4.5 H7 M4.5 2 V7" stroke="#000"/></svg>
<svg class="a" style="left:48px;top:868px;" width="16" height="13" viewBox="0 0 16 13"><defs><linearGradient id="fy" x1="0" y1="0" x2="1" y2="1"><stop offset="0" stop-color="#fff4c0"/><stop offset="0.55" stop-color="#f3cf5f"/><stop offset="1" stop-color="#c9901c"/></linearGradient></defs><path d="M0.5 1 H5.5 L6.5 2.5 H14.5 V4 H0.5 Z" fill="#f6edc8" stroke="#b9a676" stroke-width="0.8"/><rect x="0.5" y="3.5" width="15" height="9" fill="url(#fy)" stroke="#9a7a30" stroke-width="0.8"/><path d="M1 12.5 H15.5 V4" fill="none" stroke="#3a3020" stroke-width="1.2"/></svg>
<div class="t " style="left:66px;top:869.0px;font-size:14px;line-height:14px;color:#333;font-weight:normal;letter-spacing:0.1px;">public_html</div>
<div class="a" style="left:40px;top:897px;width:8px;height:1px;border-top:1px dotted #777;"></div>
<svg class="a" style="left:35px;top:893px;" width="9" height="9" viewBox="0 0 9 9"><rect x="0.5" y="0.5" width="8" height="8" fill="#fff" stroke="#888"/><path d="M2 4.5 H7 M4.5 2 V7" stroke="#000"/></svg>
<svg class="a" style="left:48px;top:890px;" width="16" height="13" viewBox="0 0 16 13"><defs><linearGradient id="fy" x1="0" y1="0" x2="1" y2="1"><stop offset="0" stop-color="#fff4c0"/><stop offset="0.55" stop-color="#f3cf5f"/><stop offset="1" stop-color="#c9901c"/></linearGradient></defs><path d="M0.5 1 H5.5 L6.5 2.5 H14.5 V4 H0.5 Z" fill="#f6edc8" stroke="#b9a676" stroke-width="0.8"/><rect x="0.5" y="3.5" width="15" height="9" fill="url(#fy)" stroke="#9a7a30" stroke-width="0.8"/><path d="M1 12.5 H15.5 V4" fill="none" stroke="#3a3020" stroke-width="1.2"/></svg>
<div class="t " style="left:68px;top:891.0px;font-size:14px;line-height:14px;color:#333;font-weight:normal;letter-spacing:0.1px;">tmp</div>
<div class="a" style="left:0px;top:896px;width:313px;height:8px;background:#fff;"></div>
<div class="a" style="left:313px;top:225px;width:17px;height:671px;background:#f0f0f0;"></div>
<div class="a" style="left:313px;top:242px;width:15px;height:584px;background:#cdcdcd;"></div>
<svg class="a" style="left:317px;top:230px;" width="8" height="6" viewBox="0 0 8 6"><path d="M0.8 5 L4 1.8 L7.2 5" fill="none" stroke="#505050" stroke-width="1.6"/></svg>
<svg class="a" style="left:317px;top:886px;" width="8" height="6" viewBox="0 0 8 6"><path d="M0.8 1 L4 4.2 L7.2 1" fill="none" stroke="#505050" stroke-width="1.6"/></svg>
<div class="a" style="left:330px;top:225px;width:790px;height:679px;background:#fff;"></div>
<div class="a" style="left:330px;top:225px;width:790px;height:1px;background:#777;"></div>
<div class="a" style="left:330px;top:225px;width:1px;height:679px;background:#777;"></div>
<div class="a" style="left:331px;top:226px;width:789px;height:26px;background:#f2f2f2;"></div>
<div class="a" style="left:331px;top:252px;width:789px;height:1px;background:#777;"></div>
<div class="t " style="left:376px;top:232.0px;font-size:14px;line-height:14px;color:#111;font-weight:normal;">Name</div>
<div class="t " style="left:576px;top:232.0px;font-size:14px;line-height:14px;color:#111;font-weight:normal;">Size</div>
<div class="t " style="left:676px;top:232.0px;font-size:14px;line-height:14px;color:#111;font-weight:normal;">Last Modified</div>
<div class="t " style="left:876px;top:232.0px;font-size:14px;line-height:14px;color:#111;font-weight:normal;">Type</div>
<div class="t " style="left:1056px;top:232.0px;font-size:14px;line-height:14px;color:#111;font-weight:normal;">Permissions</div>
<div class="a" style="left:331px;top:261px;width:789px;height:1px;background:#ddd;"></div>
<div class="a" style="left:331px;top:262px;width:789px;height:27px;background:#f9f9f9;"></div>
<div class="a" style="left:331px;top:289px;width:789px;height:1px;background:#ddd;"></div>
<svg class="a" style="left:342px;top:267px;" width="19" height="17" viewBox="0 0 19 17"><defs><linearGradient id="bk" x1="0" y1="0" x2="0" y2="1"><stop offset="0" stop-color="#a3a3a3"/><stop offset="1" stop-color="#6a6a6a"/></linearGradient><linearGradient id="bf" x1="0" y1="0" x2="0" y2="1"><stop offset="0" stop-color="#93b9e6"/><stop offset="1" stop-color="#6a9ad5"/></linearGradient></defs><path d="M0.6 1 H8 L9.2 3 H14.8 V16 H0.6 Z" fill="url(#bk)"/><path d="M2 5.2 H17.6 Q18.2 5.2 18 6 L17.2 15.3 Q17.1 16 16.4 16 H2 Z" fill="url(#bf)" stroke="#4474b8" stroke-width="0.8"/></svg>
<div class="t " style="left:376px;top:269.0px;font-size:14px;line-height:14px;color:#333;font-weight:normal;letter-spacing:0.1px;">.subaccounts</div>
<div class="t " style="left:576px;top:269.0px;font-size:14px;line-height:14px;color:#333;font-weight:normal;letter-spacing:0.1px;">4 KB</div>
<div class="t " style="left:676px;top:269.0px;font-size:14px;line-height:14px;color:#333;font-weight:normal;letter-spacing:0.1px;">May 10, 2017 3:50 PM</div>
<div class="t " style="left:876px;top:269.0px;font-size:14px;line-height:14px;color:#333;font-weight:normal;letter-spacing:0.1px;">httpd/unix-directory</div>
<div class="t " style="left:1056px;top:269.0px;font-size:14px;line-height:14px;color:#333;font-weight:normal;letter-spacing:0.1px;">0755</div>
<div class="a" style="left:331px;top:290px;width:789px;height:27px;background:#fff;"></div>
<div class="a" style="left:331px;top:317px;width:789px;height:1px;background:#ddd;"></div>
<svg class="a" style="left:342px;top:295px;" width="19" height="17" viewBox="0 0 19 17"><defs><linearGradient id="bk" x1="0" y1="0" x2="0" y2="1"><stop offset="0" stop-color="#a3a3a3"/><stop offset="1" stop-color="#6a6a6a"/></linearGradient><linearGradient id="bf" x1="0" y1="0" x2="0" y2="1"><stop offset="0" stop-color="#93b9e6"/><stop offset="1" stop-color="#6a9ad5"/></linearGradient></defs><path d="M0.6 1 H8 L9.2 3 H14.8 V16 H0.6 Z" fill="url(#bk)"/><path d="M2 5.2 H17.6 Q18.2 5.2 18 6 L17.2 15.3 Q17.1 16 16.4 16 H2 Z" fill="url(#bf)" stroke="#4474b8" stroke-width="0.8"/></svg>
<div class="t " style="left:376px;top:297.0px;font-size:14px;line-height:14px;color:#333;font-weight:normal;letter-spacing:0.1px;">.trash</div>
<div class="t " style="left:576px;top:297.0px;font-size:14px;line-height:14px;color:#333;font-weight:normal;letter-spacing:0.1px;">4 KB</div>
<div class="t " style="left:676px;top:297.0px;font-size:14px;line-height:14px;color:#333;font-weight:normal;letter-spacing:0.1px;">Today 11:39 AM</div>
<div class="t " style="left:876px;top:297.0px;font-size:14px;line-height:14px;color:#333;font-weight:normal;letter-spacing:0.1px;">httpd/unix-directory</div>
<div class="t " style="left:1056px;top:297.0px;font-size:14px;line-height:14px;color:#333;font-weight:normal;letter-spacing:0.1px;">0755</div>
<div class="a" style="left:331px;top:318px;width:789px;height:27px;background:#f9f9f9;"></div>
<div class="a" style="left:331px;top:345px;width:789px;height:1px;background:#ddd;"></div>
<svg class="a" style="left:342px;top:323px;" width="19" height="17" viewBox="0 0 19 17"><defs><linearGradient id="bk" x1="0" y1="0" x2="0" y2="1"><stop offset="0" stop-color="#a3a3a3"/><stop offset="1" stop-color="#6a6a6a"/></linearGradient><linearGradient id="bf" x1="0" y1="0" x2="0" y2="1"><stop offset="0" stop-color="#93b9e6"/><stop offset="1" stop-color="#6a9ad5"/></linearGradient></defs><path d="M0.6 1 H8 L9.2 3 H14.8 V16 H0.6 Z" fill="url(#bk)"/><path d="M2 5.2 H17.6 Q18.2 5.2 18 6 L17.2 15.3 Q17.1 16 16.4 16 H2 Z" fill="url(#bf)" stroke="#4474b8" stroke-width="0.8"/></svg>
<div class="t " style="left:376px;top:325.0px;font-size:14px;line-height:14px;color:#333;font-weight:normal;letter-spacing:0.1px;">bin</div>
<div class="t " style="left:576px;top:325.0px;font-size:14px;line-height:14px;color:#333;font-weight:normal;letter-spacing:0.1px;">4 KB</div>
<div class="t " style="left:676px;top:325.0px;font-size:14px;line-height:14px;color:#333;font-weight:normal;letter-spacing:0.1px;">May 5, 2017 12:20 PM</div>
<div class="t " style="left:876px;top:325.0px;font-size:14px;line-height:14px;color:#333;font-weight:normal;letter-spacing:0.1px;">httpd/unix-directory</div>
<div class="t " style="left:1056px;top:325.0px;font-size:14px;line-height:14px;color:#333;font-weight:normal;letter-spacing:0.1px;">0755</div>
<div class="a" style="left:331px;top:346px;width:789px;height:27px;background:#fff;"></div>
<div class="a" style="left:331px;top:373px;width:789px;height:1px;background:#ddd;"></div>
<svg class="a" style="left:342px;top:351px;" width="19" height="17" viewBox="0 0 19 17"><defs><linearGradient id="bk" x1="0" y1="0" x2="0" y2="1"><stop offset="0" stop-color="#a3a3a3"/><stop offset="1" stop-color="#6a6a6a"/></linearGradient><linearGradient id="bf" x1="0" y1="0" x2="0" y2="1"><stop offset="0" stop-color="#93b9e6"/><stop offset="1" stop-color="#6a9ad5"/></linearGradient></defs><path d="M0.6 1 H8 L9.2 3 H14.8 V16 H0.6 Z" fill="url(#bk)"/><path d="M2 5.2 H17.6 Q18.2 5.2 18 6 L17.2 15.3 Q17.1 16 16.4 16 H2 Z" fill="url(#bf)" stroke="#4474b8" stroke-width="0.8"/></svg>
<div class="t " style="left:376px;top:353.0px;font-size:14px;line-height:14px;color:#333;font-weight:normal;letter-spacing:0.1px;">etc</div>
<div class="t " style="left:576px;top:353.0px;font-size:14px;line-height:14px;color:#333;font-weight:normal;letter-spacing:0.1px;">4 KB</div>
<div class="t " style="left:676px;top:353.0px;font-size:14px;line-height:14px;color:#333;font-weight:normal;letter-spacing:0.1px;">May 10, 2017 2:58 PM</div>
<div class="t " style="left:876px;top:353.0px;font-size:14px;line-height:14px;color:#333;font-weight:normal;letter-spacing:0.1px;">httpd/unix-directory</div>
<div class="t " style="left:1056px;top:353.0px;font-size:14px;line-height:14px;color:#333;font-weight:normal;letter-spacing:0.1px;">0750</div>
<div class="a" style="left:331px;top:374px;width:789px;height:27px;background:#f9f9f9;"></div>
<div class="a" style="left:331px;top:401px;width:789px;height:1px;background:#ddd;"></div>
<svg class="a" style="left:342px;top:379px;" width="19" height="17" viewBox="0 0 19 17"><defs><linearGradient id="bk" x1="0" y1="0" x2="0" y2="1"><stop offset="0" stop-color="#a3a3a3"/><stop offset="1" stop-color="#6a6a6a"/></linearGradient><linearGradient id="bf" x1="0" y1="0" x2="0" y2="1"><stop offset="0" stop-color="#93b9e6"/><stop offset="1" stop-color="#6a9ad5"/></linearGradient></defs><path d="M0.6 1 H8 L9.2 3 H14.8 V16 H0.6 Z" fill="url(#bk)"/><path d="M2 5.2 H17.6 Q18.2 5.2 18 6 L17.2 15.3 Q17.1 16 16.4 16 H2 Z" fill="url(#bf)" stroke="#4474b8" stroke-width="0.8"/></svg>
<div class="t " style="left:376px;top:381.0px;font-size:14px;line-height:14px;color:#333;font-weight:normal;letter-spacing:0.1px;">example.com</div>
<div class="t " style="left:576px;top:381.0px;font-size:14px;line-height:14px;color:#333;font-weight:normal;letter-spacing:0.1px;">4 KB</div>
<div class="t " style="left:676px;top:381.0px;font-size:14px;line-height:14px;color:#333;font-weight:normal;letter-spacing:0.1px;">Today 10:34 AM</div>
<div class="t " style="left:876px;top:381.0px;font-size:14px;line-height:14px;color:#333;font-weight:normal;letter-spacing:0.1px;">httpd/unix-directory</div>
<div class="t " style="left:1056px;top:381.0px;font-size:14px;line-height:14px;color:#333;font-weight:normal;letter-spacing:0.1px;">0750</div>
<div class="a" style="left:331px;top:402px;width:789px;height:27px;background:#fff;"></div>
<div class="a" style="left:331px;top:429px;width:789px;height:1px;background:#ddd;"></div>
<svg class="a" style="left:342px;top:407px;" width="19" height="17" viewBox="0 0 19 17"><defs><linearGradient id="bk" x1="0" y1="0" x2="0" y2="1"><stop offset="0" stop-color="#a3a3a3"/><stop offset="1" stop-color="#6a6a6a"/></linearGradient><linearGradient id="bf" x1="0" y1="0" x2="0" y2="1"><stop offset="0" stop-color="#93b9e6"/><stop offset="1" stop-color="#6a9ad5"/></linearGradient></defs><path d="M0.6 1 H8 L9.2 3 H14.8 V16 H0.6 Z" fill="url(#bk)"/><path d="M2 5.2 H17.6 Q18.2 5.2 18 6 L17.2 15.3 Q17.1 16 16.4 16 H2 Z" fill="url(#bf)" stroke="#4474b8" stroke-width="0.8"/></svg>
<div class="t " style="left:376px;top:409.0px;font-size:14px;line-height:14px;color:#333;font-weight:normal;letter-spacing:0.1px;">logs</div>
<div class="t " style="left:576px;top:409.0px;font-size:14px;line-height:14px;color:#333;font-weight:normal;letter-spacing:0.1px;">4 KB</div>
<div class="t " style="left:676px;top:409.0px;font-size:14px;line-height:14px;color:#333;font-weight:normal;letter-spacing:0.1px;">May 1, 2017 8:10 AM</div>
<div class="t " style="left:876px;top:409.0px;font-size:14px;line-height:14px;color:#333;font-weight:normal;letter-spacing:0.1px;">httpd/unix-directory</div>
<div class="t " style="left:1056px;top:409.0px;font-size:14px;line-height:14px;color:#333;font-weight:normal;letter-spacing:0.1px;">0755</div>
<div class="a" style="left:331px;top:430px;width:789px;height:27px;background:#f9f9f9;"></div>
<div class="a" style="left:331px;top:457px;width:789px;height:1px;background:#ddd;"></div>
<svg class="a" style="left:342px;top:436px;" width="18" height="17" viewBox="0 0 18 17"><defs><linearGradient id="ml" x1="0" y1="0" x2="1" y2="1"><stop offset="0" stop-color="#f2f7fc"/><stop offset="0.6" stop-color="#dde8f3"/><stop offset="1" stop-color="#b8cadc"/></linearGradient></defs><path d="M1.2 1.1 L16.7 0.2 L16.9 15.4 L0.3 13.5 Z" fill="url(#ml)" stroke="#8fa6be" stroke-width="0.9"/><path d="M1.6 1.6 L7.4 8.8 L16.2 0.8" fill="none" stroke="#8aa8c6" stroke-width="1"/><path d="M0.8 13 L5.8 8.6 M16.5 14.8 L11.5 8.3" fill="none" stroke="#a9bfd5" stroke-width="0.9"/></svg>
<div class="t " style="left:376px;top:437.0px;font-size:14px;line-height:14px;color:#333;font-weight:normal;letter-spacing:0.1px;">mail</div>
<div class="t " style="left:576px;top:437.0px;font-size:14px;line-height:14px;color:#333;font-weight:normal;letter-spacing:0.1px;">4 KB</div>
<div class="t " style="left:676px;top:437.0px;font-size:14px;line-height:14px;color:#333;font-weight:normal;letter-spacing:0.1px;">May 10, 2017 4:26 PM</div>
<div class="t " style="left:876px;top:437.0px;font-size:14px;line-height:14px;color:#333;font-weight:normal;letter-spacing:0.1px;">mail</div>
<div class="t " style="left:1056px;top:437.0px;font-size:14px;line-height:14px;color:#333;font-weight:normal;letter-spacing:0.1px;">0751</div>
<div class="a" style="left:331px;top:458px;width:789px;height:27px;background:#fff;"></div>
<div class="a" style="left:331px;top:485px;width:789px;height:1px;background:#ddd;"></div>
<svg class="a" style="left:342px;top:463px;" width="19" height="17" viewBox="0 0 19 17"><defs><linearGradient id="bk" x1="0" y1="0" x2="0" y2="1"><stop offset="0" stop-color="#a3a3a3"/><stop offset="1" stop-color="#6a6a6a"/></linearGradient><linearGradient id="bf" x1="0" y1="0" x2="0" y2="1"><stop offset="0" stop-color="#93b9e6"/><stop offset="1" stop-color="#6a9ad5"/></linearGradient></defs><path d="M0.6 1 H8 L9.2 3 H14.8 V16 H0.6 Z" fill="url(#bk)"/><path d="M2 5.2 H17.6 Q18.2 5.2 18 6 L17.2 15.3 Q17.1 16 16.4 16 H2 Z" fill="url(#bf)" stroke="#4474b8" stroke-width="0.8"/></svg>
<div class="t " style="left:376px;top:465.0px;font-size:14px;line-height:14px;color:#333;font-weight:normal;letter-spacing:0.1px;">perl</div>
<div class="t " style="left:576px;top:465.0px;font-size:14px;line-height:14px;color:#333;font-weight:normal;letter-spacing:0.1px;">4 KB</div>
<div class="t " style="left:676px;top:465.0px;font-size:14px;line-height:14px;color:#333;font-weight:normal;letter-spacing:0.1px;">Yesterday 11:42 AM</div>
<div class="t " style="left:876px;top:465.0px;font-size:14px;line-height:14px;color:#333;font-weight:normal;letter-spacing:0.1px;">httpd/unix-directory</div>
<div class="t " style="left:1056px;top:465.0px;font-size:14px;line-height:14px;color:#333;font-weight:normal;letter-spacing:0.1px;">0755</div>
<div class="a" style="left:331px;top:486px;width:789px;height:27px;background:#f9f9f9;"></div>
<div class="a" style="left:331px;top:513px;width:789px;height:1px;background:#ddd;"></div>
<svg class="a" style="left:342px;top:491px;" width="19" height="17" viewBox="0 0 19 17"><defs><linearGradient id="bk" x1="0" y1="0" x2="0" y2="1"><stop offset="0" stop-color="#a3a3a3"/><stop offset="1" stop-color="#6a6a6a"/></linearGradient><linearGradient id="bf" x1="0" y1="0" x2="0" y2="1"><stop offset="0" stop-color="#93b9e6"/><stop offset="1" stop-color="#6a9ad5"/></linearGradient></defs><path d="M0.6 1 H8 L9.2 3 H14.8 V16 H0.6 Z" fill="url(#bk)"/><path d="M2 5.2 H17.6 Q18.2 5.2 18 6 L17.2 15.3 Q17.1 16 16.4 16 H2 Z" fill="url(#bf)" stroke="#4474b8" stroke-width="0.8"/></svg>
<div class="t " style="left:376px;top:493.0px;font-size:14px;line-height:14px;color:#333;font-weight:normal;letter-spacing:0.1px;">perl5</div>
<div class="t " style="left:576px;top:493.0px;font-size:14px;line-height:14px;color:#333;font-weight:normal;letter-spacing:0.1px;">4 KB</div>
<div class="t " style="left:676px;top:493.0px;font-size:14px;line-height:14px;color:#333;font-weight:normal;letter-spacing:0.1px;">Aug 31, 2016 3:21 PM</div>
<div class="t " style="left:876px;top:493.0px;font-size:14px;line-height:14px;color:#333;font-weight:normal;letter-spacing:0.1px;">httpd/unix-directory</div>
<div class="t " style="left:1056px;top:493.0px;font-size:14px;line-height:14px;color:#333;font-weight:normal;letter-spacing:0.1px;">0755</div>
<div class="a" style="left:331px;top:514px;width:789px;height:27px;background:#fff;"></div>
<div class="a" style="left:331px;top:541px;width:789px;height:1px;background:#ddd;"></div>
<svg class="a" style="left:342px;top:519px;" width="19" height="17" viewBox="0 0 19 17"><defs><linearGradient id="bk" x1="0" y1="0" x2="0" y2="1"><stop offset="0" stop-color="#a3a3a3"/><stop offset="1" stop-color="#6a6a6a"/></linearGradient><linearGradient id="bf" x1="0" y1="0" x2="0" y2="1"><stop offset="0" stop-color="#93b9e6"/><stop offset="1" stop-color="#6a9ad5"/></linearGradient></defs><path d="M0.6 1 H8 L9.2 3 H14.8 V16 H0.6 Z" fill="url(#bk)"/><path d="M2 5.2 H17.6 Q18.2 5.2 18 6 L17.2 15.3 Q17.1 16 16.4 16 H2 Z" fill="url(#bf)" stroke="#4474b8" stroke-width="0.8"/></svg>
<div class="t " style="left:376px;top:521.0px;font-size:14px;line-height:14px;color:#333;font-weight:normal;letter-spacing:0.1px;">php</div>
<div class="t " style="left:576px;top:521.0px;font-size:14px;line-height:14px;color:#333;font-weight:normal;letter-spacing:0.1px;">4 KB</div>
<div class="t " style="left:676px;top:521.0px;font-size:14px;line-height:14px;color:#333;font-weight:normal;letter-spacing:0.1px;">May 5, 2017 12:20 PM</div>
<div class="t " style="left:876px;top:521.0px;font-size:14px;line-height:14px;color:#333;font-weight:normal;letter-spacing:0.1px;">httpd/unix-directory</div>
<div class="t " style="left:1056px;top:521.0px;font-size:14px;line-height:14px;color:#333;font-weight:normal;letter-spacing:0.1px;">0755</div>
<div class="a" style="left:331px;top:542px;width:789px;height:27px;background:#f9f9f9;"></div>
<div class="a" style="left:331px;top:569px;width:789px;height:1px;background:#ddd;"></div>
<svg class="a" style="left:342px;top:548px;" width="17" height="17" viewBox="0 0 17 17"><defs><linearGradient id="dm" x1="0" y1="0" x2="1" y2="1"><stop offset="0" stop-color="#ffe680"/><stop offset="1" stop-color="#e9b400"/></linearGradient></defs><path d="M8.5 0.6 L16.4 8.5 L8.5 16.4 L0.6 8.5 Z" fill="url(#dm)" stroke="#d7a40c" stroke-width="0.8"/><path d="M6.6 5 V11.6 M5.1 6.6 L6.6 5 L8.1 6.6 M10.4 5.4 V12 M8.9 10.4 L10.4 12 L11.9 10.4" stroke="#7d5716" stroke-width="1.4" fill="none"/></svg>
<div class="t " style="left:376px;top:549.0px;font-size:14px;line-height:14px;color:#333;font-weight:normal;letter-spacing:0.1px;">public_ftp</div>
<div class="t " style="left:576px;top:549.0px;font-size:14px;line-height:14px;color:#333;font-weight:normal;letter-spacing:0.1px;">4 KB</div>
<div class="t " style="left:676px;top:549.0px;font-size:14px;line-height:14px;color:#333;font-weight:normal;letter-spacing:0.1px;">Nov 15, 2016 3:38 PM</div>
<div class="t " style="left:876px;top:549.0px;font-size:14px;line-height:14px;color:#333;font-weight:normal;letter-spacing:0.1px;">publicftp</div>
<div class="t " style="left:1056px;top:549.0px;font-size:14px;line-height:14px;color:#333;font-weight:normal;letter-spacing:0.1px;">0755</div>
<div class="a" style="left:331px;top:570px;width:789px;height:27px;background:#fff;"></div>
<div class="a" style="left:331px;top:597px;width:789px;height:1px;background:#ddd;"></div>
<svg class="a" style="left:342px;top:574px;" width="18" height="18" viewBox="0 0 18 18"><defs><radialGradient id="gl" cx="0.45" cy="0.3" r="0.8"><stop offset="0" stop-color="#d6ecff"/><stop offset="0.45" stop-color="#3d86e0"/><stop offset="0.8" stop-color="#1540a8"/><stop offset="1" stop-color="#0a1f6e"/></radialGradient></defs><circle cx="8.7" cy="9" r="8.5" fill="url(#gl)"/><path d="M3.2 6 Q6 3 9.5 4.2 Q8 6.5 10.5 8 Q7 10 4.5 13 Q2 10 3.2 6 Z M11 11 Q14 9.5 15.6 11.5 Q14 14.5 11.8 15 Q12 13 11 11 Z" fill="#e6f3ff" opacity="0.55"/></svg>
<div class="t " style="left:376px;top:577.0px;font-size:14px;line-height:14px;color:#333;font-weight:normal;letter-spacing:0.1px;">public_html</div>
<div class="t " style="left:576px;top:577.0px;font-size:14px;line-height:14px;color:#333;font-weight:normal;letter-spacing:0.1px;">4 KB</div>
<div class="t " style="left:676px;top:577.0px;font-size:14px;line-height:14px;color:#333;font-weight:normal;letter-spacing:0.1px;">Today 11:46 AM</div>
<div class="t " style="left:876px;top:577.0px;font-size:14px;line-height:14px;color:#333;font-weight:normal;letter-spacing:0.1px;">publichtml</div>
<div class="t " style="left:1056px;top:577.0px;font-size:14px;line-height:14px;color:#333;font-weight:normal;letter-spacing:0.1px;">0750</div>
<div class="a" style="left:331px;top:598px;width:789px;height:27px;background:#f9f9f9;"></div>
<div class="a" style="left:331px;top:625px;width:789px;height:1px;background:#ddd;"></div>
<svg class="a" style="left:342px;top:603px;" width="19" height="17" viewBox="0 0 19 17"><defs><linearGradient id="bk" x1="0" y1="0" x2="0" y2="1"><stop offset="0" stop-color="#a3a3a3"/><stop offset="1" stop-color="#6a6a6a"/></linearGradient><linearGradient id="bf" x1="0" y1="0" x2="0" y2="1"><stop offset="0" stop-color="#93b9e6"/><stop offset="1" stop-color="#6a9ad5"/></linearGradient></defs><path d="M0.6 1 H8 L9.2 3 H14.8 V16 H0.6 Z" fill="url(#bk)"/><path d="M2 5.2 H17.6 Q18.2 5.2 18 6 L17.2 15.3 Q17.1 16 16.4 16 H2 Z" fill="url(#bf)" stroke="#4474b8" stroke-width="0.8"/></svg>
<div class="t " style="left:376px;top:605.0px;font-size:14px;line-height:14px;color:#333;font-weight:normal;letter-spacing:0.1px;">tmp</div>
<div class="t " style="left:576px;top:605.0px;font-size:14px;line-height:14px;color:#333;font-weight:normal;letter-spacing:0.1px;">4 KB</div>
<div class="t " style="left:676px;top:605.0px;font-size:14px;line-height:14px;color:#333;font-weight:normal;letter-spacing:0.1px;">Today 10:14 AM</div>
<div class="t " style="left:876px;top:605.0px;font-size:14px;line-height:14px;color:#333;font-weight:normal;letter-spacing:0.1px;">httpd/unix-directory</div>
<div class="t " style="left:1056px;top:605.0px;font-size:14px;line-height:14px;color:#333;font-weight:normal;letter-spacing:0.1px;">0755</div>
<div class="a" style="left:331px;top:626px;width:789px;height:27px;background:#fff;"></div>
<div class="a" style="left:331px;top:653px;width:789px;height:1px;background:#ddd;"></div>
<svg class="a" style="left:343px;top:631px;" width="16" height="18" viewBox="0 0 16 18"><rect x="0.5" y="0.5" width="15" height="17" fill="#f3f3f3"/><path d="M0.7 17 V0.7 H15.3" fill="none" stroke="#d6d6d6" stroke-width="1"/><path d="M15.2 0.7 V17.3" fill="none" stroke="#a9a9a9" stroke-width="1.2"/><path d="M0.5 17.2 H15.5" stroke="#7c7c7c" stroke-width="1.4"/><rect x="5" y="3" width="8.5" height="3.2" fill="#d9d9d9"/><rect x="5" y="7" width="8.5" height="3.4" fill="#d9d9d9"/><rect x="5" y="11.5" width="8" height="4.2" fill="#d9d9d9"/><path d="M3 2.5 V16" stroke="#e2e2e2" stroke-width="1"/></svg>
<div class="t " style="left:376px;top:633.0px;font-size:14px;line-height:14px;color:#333;font-weight:normal;letter-spacing:0.1px;">.bash_history</div>
<div class="t " style="left:576px;top:633.0px;font-size:14px;line-height:14px;color:#333;font-weight:normal;letter-spacing:0.1px;"></div>
<div class="t " style="left:676px;top:633.0px;font-size:14px;line-height:14px;color:#333;font-weight:normal;letter-spacing:0.1px;">Apr 26, 2017 1:00 PM</div>
<div class="t " style="left:876px;top:633.0px;font-size:14px;line-height:14px;color:#333;font-weight:normal;letter-spacing:0.1px;">text/x-generic</div>
<div class="t " style="left:1056px;top:633.0px;font-size:14px;line-height:14px;color:#333;font-weight:normal;letter-spacing:0.1px;">0644</div>
<div class="a" style="left:331px;top:654px;width:789px;height:27px;background:#f9f9f9;"></div>
<div class="a" style="left:331px;top:681px;width:789px;height:1px;background:#ddd;"></div>
<svg class="a" style="left:343px;top:659px;" width="16" height="18" viewBox="0 0 16 18"><rect x="0.5" y="0.5" width="15" height="17" fill="#f3f3f3"/><path d="M0.7 17 V0.7 H15.3" fill="none" stroke="#d6d6d6" stroke-width="1"/><path d="M15.2 0.7 V17.3" fill="none" stroke="#a9a9a9" stroke-width="1.2"/><path d="M0.5 17.2 H15.5" stroke="#7c7c7c" stroke-width="1.4"/><rect x="5" y="3" width="8.5" height="3.2" fill="#d9d9d9"/><rect x="5" y="7" width="8.5" height="3.4" fill="#d9d9d9"/><rect x="5" y="11.5" width="8" height="4.2" fill="#d9d9d9"/><path d="M3 2.5 V16" stroke="#e2e2e2" stroke-width="1"/></svg>
<div class="t " style="left:376px;top:661.0px;font-size:14px;line-height:14px;color:#333;font-weight:normal;letter-spacing:0.1px;">.bash_logout</div>
<div class="t " style="left:576px;top:661.0px;font-size:14px;line-height:14px;color:#333;font-weight:normal;letter-spacing:0.1px;"></div>
<div class="t " style="left:676px;top:661.0px;font-size:14px;line-height:14px;color:#333;font-weight:normal;letter-spacing:0.1px;">Nov 15, 2016 3:38 PM</div>
<div class="t " style="left:876px;top:661.0px;font-size:14px;line-height:14px;color:#333;font-weight:normal;letter-spacing:0.1px;">text/x-generic</div>
<div class="t " style="left:1056px;top:661.0px;font-size:14px;line-height:14px;color:#333;font-weight:normal;letter-spacing:0.1px;">0644</div>
<div class="a" style="left:331px;top:682px;width:789px;height:27px;background:#fff;"></div>
<div class="a" style="left:331px;top:709px;width:789px;height:1px;background:#ddd;"></div>
<svg class="a" style="left:343px;top:687px;" width="16" height="18" viewBox="0 0 16 18"><rect x="0.5" y="0.5" width="15" height="17" fill="#f3f3f3"/><path d="M0.7 17 V0.7 H15.3" fill="none" stroke="#d6d6d6" stroke-width="1"/><path d="M15.2 0.7 V17.3" fill="none" stroke="#a9a9a9" stroke-width="1.2"/><path d="M0.5 17.2 H15.5" stroke="#7c7c7c" stroke-width="1.4"/><rect x="5" y="3" width="8.5" height="3.2" fill="#d9d9d9"/><rect x="5" y="7" width="8.5" height="3.4" fill="#d9d9d9"/><rect x="5" y="11.5" width="8" height="4.2" fill="#d9d9d9"/><path d="M3 2.5 V16" stroke="#e2e2e2" stroke-width="1"/></svg>
<div class="t " style="left:376px;top:689.0px;font-size:14px;line-height:14px;color:#333;font-weight:normal;letter-spacing:0.1px;">.bash_profile</div>
<div class="t " style="left:576px;top:689.0px;font-size:14px;line-height:14px;color:#333;font-weight:normal;letter-spacing:0.1px;"></div>
<div class="t " style="left:676px;top:689.0px;font-size:14px;line-height:14px;color:#333;font-weight:normal;letter-spacing:0.1px;">Nov 15, 2016 3:38 PM</div>
<div class="t " style="left:876px;top:689.0px;font-size:14px;line-height:14px;color:#333;font-weight:normal;letter-spacing:0.1px;">text/x-generic</div>
<div class="t " style="left:1056px;top:689.0px;font-size:14px;line-height:14px;color:#333;font-weight:normal;letter-spacing:0.1px;">0644</div>
<div class="a" style="left:331px;top:710px;width:789px;height:27px;background:#f9f9f9;"></div>
<div class="a" style="left:331px;top:737px;width:789px;height:1px;background:#ddd;"></div>
<svg class="a" style="left:343px;top:715px;" width="16" height="18" viewBox="0 0 16 18"><rect x="0.5" y="0.5" width="15" height="17" fill="#f3f3f3"/><path d="M0.7 17 V0.7 H15.3" fill="none" stroke="#d6d6d6" stroke-width="1"/><path d="M15.2 0.7 V17.3" fill="none" stroke="#a9a9a9" stroke-width="1.2"/><path d="M0.5 17.2 H15.5" stroke="#7c7c7c" stroke-width="1.4"/><rect x="5" y="3" width="8.5" height="3.2" fill="#d9d9d9"/><rect x="5" y="7" width="8.5" height="3.4" fill="#d9d9d9"/><rect x="5" y="11.5" width="8" height="4.2" fill="#d9d9d9"/><path d="M3 2.5 V16" stroke="#e2e2e2" stroke-width="1"/></svg>
<div class="t " style="left:376px;top:717.0px;font-size:14px;line-height:14px;color:#333;font-weight:normal;letter-spacing:0.1px;">.bashrc</div>
<div class="t " style="left:576px;top:717.0px;font-size:14px;line-height:14px;color:#333;font-weight:normal;letter-spacing:0.1px;"></div>
<div class="t " style="left:676px;top:717.0px;font-size:14px;line-height:14px;color:#333;font-weight:normal;letter-spacing:0.1px;">Nov 15, 2016 3:38 PM</div>
<div class="t " style="left:876px;top:717.0px;font-size:14px;line-height:14px;color:#333;font-weight:normal;letter-spacing:0.1px;">text/x-generic</div>
<div class="t " style="left:1056px;top:717.0px;font-size:14px;line-height:14px;color:#333;font-weight:normal;letter-spacing:0.1px;">0644</div>
<div class="a" style="left:331px;top:738px;width:789px;height:27px;background:#fff;"></div>
<div class="a" style="left:331px;top:765px;width:789px;height:1px;background:#ddd;"></div>
<svg class="a" style="left:343px;top:743px;" width="16" height="18" viewBox="0 0 16 18"><rect x="0.5" y="0.5" width="15" height="17" fill="#f3f3f3"/><path d="M0.7 17 V0.7 H15.3" fill="none" stroke="#d6d6d6" stroke-width="1"/><path d="M15.2 0.7 V17.3" fill="none" stroke="#a9a9a9" stroke-width="1.2"/><path d="M0.5 17.2 H15.5" stroke="#7c7c7c" stroke-width="1.4"/><rect x="5" y="3" width="8.5" height="3.2" fill="#d9d9d9"/><rect x="5" y="7" width="8.5" height="3.4" fill="#d9d9d9"/><rect x="5" y="11.5" width="8" height="4.2" fill="#d9d9d9"/><path d="M3 2.5 V16" stroke="#e2e2e2" stroke-width="1"/></svg>
<div class="t " style="left:376px;top:745.0px;font-size:14px;line-height:14px;color:#333;font-weight:normal;letter-spacing:0.1px;">.contactemail</div>
<div class="t " style="left:576px;top:745.0px;font-size:14px;line-height:14px;color:#333;font-weight:normal;letter-spacing:0.1px;"></div>
<div class="t " style="left:676px;top:745.0px;font-size:14px;line-height:14px;color:#333;font-weight:normal;letter-spacing:0.1px;">Nov 15, 2016 3:38 PM</div>
<div class="t " style="left:876px;top:745.0px;font-size:14px;line-height:14px;color:#333;font-weight:normal;letter-spacing:0.1px;">text/x-generic</div>
<div class="t " style="left:1056px;top:745.0px;font-size:14px;line-height:14px;color:#333;font-weight:normal;letter-spacing:0.1px;">0644</div>
<div class="a" style="left:331px;top:766px;width:789px;height:27px;background:#f9f9f9;"></div>
<div class="a" style="left:331px;top:793px;width:789px;height:1px;background:#ddd;"></div>
<svg class="a" style="left:343px;top:771px;" width="16" height="18" viewBox="0 0 16 18"><rect x="0.5" y="0.5" width="15" height="17" fill="#f3f3f3"/><path d="M0.7 17 V0.7 H15.3" fill="none" stroke="#d6d6d6" stroke-width="1"/><path d="M15.2 0.7 V17.3" fill="none" stroke="#a9a9a9" stroke-width="1.2"/><path d="M0.5 17.2 H15.5" stroke="#7c7c7c" stroke-width="1.4"/><rect x="5" y="3" width="8.5" height="3.2" fill="#d9d9d9"/><rect x="5" y="7" width="8.5" height="3.4" fill="#d9d9d9"/><rect x="5" y="11.5" width="8" height="4.2" fill="#d9d9d9"/><path d="M3 2.5 V16" stroke="#e2e2e2" stroke-width="1"/></svg>
<div class="t " style="left:376px;top:773.0px;font-size:14px;line-height:14px;color:#333;font-weight:normal;letter-spacing:0.1px;">.emacs</div>
<div class="t " style="left:576px;top:773.0px;font-size:14px;line-height:14px;color:#333;font-weight:normal;letter-spacing:0.1px;"></div>
<div class="t " style="left:676px;top:773.0px;font-size:14px;line-height:14px;color:#333;font-weight:normal;letter-spacing:0.1px;">Nov 15, 2016 3:38 PM</div>
<div class="t " style="left:876px;top:773.0px;font-size:14px;line-height:14px;color:#333;font-weight:normal;letter-spacing:0.1px;">text/x-generic</div>
<div class="t " style="left:1056px;top:773.0px;font-size:14px;line-height:14px;color:#333;font-weight:normal;letter-spacing:0.1px;">0644</div>
<div class="a" style="left:331px;top:794px;width:789px;height:27px;background:#fff;"></div>
<div class="a" style="left:331px;top:821px;width:789px;height:1px;background:#ddd;"></div>
<svg class="a" style="left:343px;top:799px;" width="16" height="18" viewBox="0 0 16 18"><rect x="0.5" y="0.5" width="15" height="17" fill="#f3f3f3"/><path d="M0.7 17 V0.7 H15.3" fill="none" stroke="#d6d6d6" stroke-width="1"/><path d="M15.2 0.7 V17.3" fill="none" stroke="#a9a9a9" stroke-width="1.2"/><path d="M0.5 17.2 H15.5" stroke="#7c7c7c" stroke-width="1.4"/><rect x="5" y="3" width="8.5" height="3.2" fill="#d9d9d9"/><rect x="5" y="7" width="8.5" height="3.4" fill="#d9d9d9"/><rect x="5" y="11.5" width="8" height="4.2" fill="#d9d9d9"/><path d="M3 2.5 V16" stroke="#e2e2e2" stroke-width="1"/></svg>
<div class="t " style="left:376px;top:801.0px;font-size:14px;line-height:14px;color:#333;font-weight:normal;letter-spacing:0.1px;">.gemrc</div>
<div class="t " style="left:576px;top:801.0px;font-size:14px;line-height:14px;color:#333;font-weight:normal;letter-spacing:0.1px;"></div>
<div class="t " style="left:676px;top:801.0px;font-size:14px;line-height:14px;color:#333;font-weight:normal;letter-spacing:0.1px;">Nov 15, 2016 3:38 PM</div>
<div class="t " style="left:876px;top:801.0px;font-size:14px;line-height:14px;color:#333;font-weight:normal;letter-spacing:0.1px;">text/x-generic</div>
<div class="t " style="left:1056px;top:801.0px;font-size:14px;line-height:14px;color:#333;font-weight:normal;letter-spacing:0.1px;">0644</div>
<div class="a" style="left:331px;top:822px;width:789px;height:27px;background:#4270d8;"></div>
<div class="a" style="left:331px;top:849px;width:789px;height:1px;background:#ddd;"></div>
<svg class="a" style="left:343px;top:827px;" width="16" height="18" viewBox="0 0 16 18"><rect x="0.5" y="0.5" width="15" height="17" fill="#f3f3f3"/><path d="M0.7 17 V0.7 H15.3" fill="none" stroke="#d6d6d6" stroke-width="1"/><path d="M15.2 0.7 V17.3" fill="none" stroke="#a9a9a9" stroke-width="1.2"/><path d="M0.5 17.2 H15.5" stroke="#7c7c7c" stroke-width="1.4"/><rect x="5" y="3" width="8.5" height="3.2" fill="#d9d9d9"/><rect x="5" y="7" width="8.5" height="3.4" fill="#d9d9d9"/><rect x="5" y="11.5" width="8" height="4.2" fill="#d9d9d9"/><path d="M3 2.5 V16" stroke="#e2e2e2" stroke-width="1"/></svg>
<div class="t " style="left:376px;top:829.0px;font-size:14px;line-height:14px;color:#fff;font-weight:normal;letter-spacing:0.1px;">.htpassword</div>
<div class="t " style="left:576px;top:829.0px;font-size:14px;line-height:14px;color:#fff;font-weight:normal;letter-spacing:0.1px;"></div>
<div class="t " style="left:676px;top:829.0px;font-size:14px;line-height:14px;color:#fff;font-weight:normal;letter-spacing:0.1px;">Today 1:54 PM</div>
<div class="t " style="left:876px;top:829.0px;font-size:14px;line-height:14px;color:#fff;font-weight:normal;letter-spacing:0.1px;">text/x-generic</div>
<div class="t " style="left:1056px;top:829.0px;font-size:14px;line-height:14px;color:#fff;font-weight:normal;letter-spacing:0.1px;">0644</div>
<div class="a" style="left:331px;top:850px;width:789px;height:27px;background:#fff;"></div>
<div class="a" style="left:331px;top:877px;width:789px;height:1px;background:#ddd;"></div>
<svg class="a" style="left:343px;top:855px;" width="16" height="18" viewBox="0 0 16 18"><rect x="0.5" y="0.5" width="15" height="17" fill="#f3f3f3"/><path d="M0.7 17 V0.7 H15.3" fill="none" stroke="#d6d6d6" stroke-width="1"/><path d="M15.2 0.7 V17.3" fill="none" stroke="#a9a9a9" stroke-width="1.2"/><path d="M0.5 17.2 H15.5" stroke="#7c7c7c" stroke-width="1.4"/><rect x="5" y="3" width="8.5" height="3.2" fill="#d9d9d9"/><rect x="5" y="7" width="8.5" height="3.4" fill="#d9d9d9"/><rect x="5" y="11.5" width="8" height="4.2" fill="#d9d9d9"/><path d="M3 2.5 V16" stroke="#e2e2e2" stroke-width="1"/></svg>
<div class="t " style="left:376px;top:857.0px;font-size:14px;line-height:14px;color:#333;font-weight:normal;letter-spacing:0.1px;">.lastlogin</div>
<div class="t " style="left:576px;top:857.0px;font-size:14px;line-height:14px;color:#333;font-weight:normal;letter-spacing:0.1px;"></div>
<div class="t " style="left:676px;top:857.0px;font-size:14px;line-height:14px;color:#333;font-weight:normal;letter-spacing:0.1px;">Today 1:57 PM</div>
<div class="t " style="left:876px;top:857.0px;font-size:14px;line-height:14px;color:#333;font-weight:normal;letter-spacing:0.1px;">text/x-generic</div>
<div class="t " style="left:1056px;top:857.0px;font-size:14px;line-height:14px;color:#333;font-weight:normal;letter-spacing:0.1px;">0644</div>
<div class="a" style="left:331px;top:878px;width:789px;height:27px;background:#f9f9f9;"></div>
<div class="a" style="left:331px;top:905px;width:789px;height:1px;background:#ddd;"></div>
<svg class="a" style="left:343px;top:883px;" width="16" height="18" viewBox="0 0 16 18"><rect x="0.5" y="0.5" width="15" height="17" fill="#f3f3f3"/><path d="M0.7 17 V0.7 H15.3" fill="none" stroke="#d6d6d6" stroke-width="1"/><path d="M15.2 0.7 V17.3" fill="none" stroke="#a9a9a9" stroke-width="1.2"/><path d="M0.5 17.2 H15.5" stroke="#7c7c7c" stroke-width="1.4"/><rect x="5" y="3" width="8.5" height="3.2" fill="#d9d9d9"/><rect x="5" y="7" width="8.5" height="3.4" fill="#d9d9d9"/><rect x="5" y="11.5" width="8" height="4.2" fill="#d9d9d9"/><path d="M3 2.5 V16" stroke="#e2e2e2" stroke-width="1"/></svg>
<div class="t " style="left:376px;top:885.0px;font-size:14px;line-height:14px;color:#333;font-weight:normal;letter-spacing:0.1px;">.pearrc</div>
<div class="t " style="left:576px;top:885.0px;font-size:14px;line-height:14px;color:#333;font-weight:normal;letter-spacing:0.1px;"></div>
<div class="t " style="left:676px;top:885.0px;font-size:14px;line-height:14px;color:#333;font-weight:normal;letter-spacing:0.1px;">Today 1:58 PM</div>
<div class="t " style="left:876px;top:885.0px;font-size:14px;line-height:14px;color:#333;font-weight:normal;letter-spacing:0.1px;">text/x-generic</div>
<div class="t " style="left:1056px;top:885.0px;font-size:14px;line-height:14px;color:#333;font-weight:normal;letter-spacing:0.1px;">0644</div>
<svg class="a" style="left:342px;top:239px;" width="19" height="17" viewBox="0 0 19 17"><defs><linearGradient id="bk" x1="0" y1="0" x2="0" y2="1"><stop offset="0" stop-color="#a3a3a3"/><stop offset="1" stop-color="#6a6a6a"/></linearGradient><linearGradient id="bf" x1="0" y1="0" x2="0" y2="1"><stop offset="0" stop-color="#93b9e6"/><stop offset="1" stop-color="#6a9ad5"/></linearGradient></defs><path d="M0.6 1 H8 L9.2 3 H14.8 V16 H0.6 Z" fill="url(#bk)"/><path d="M2 5.2 H17.6 Q18.2 5.2 18 6 L17.2 15.3 Q17.1 16 16.4 16 H2 Z" fill="url(#bf)" stroke="#4474b8" stroke-width="0.8"/></svg>
<div class="t " style="left:376px;top:241.0px;font-size:14px;line-height:14px;color:#333;font-weight:normal;">.spamassassin</div>
<div class="t " style="left:576px;top:241.0px;font-size:14px;line-height:14px;color:#333;font-weight:normal;">4 KB</div>
<div class="t " style="left:676px;top:241.0px;font-size:14px;line-height:14px;color:#333;font-weight:normal;">May 10, 2017 3:50 PM</div>
<div class="t " style="left:876px;top:241.0px;font-size:14px;line-height:14px;color:#333;font-weight:normal;">httpd/unix-directory</div>
<div class="t " style="left:1056px;top:241.0px;font-size:14px;line-height:14px;color:#333;font-weight:normal;">0755</div>
<div class="a" style="left:331px;top:226px;width:789px;height:26px;background:#f2f2f2;"></div>
<div class="a" style="left:331px;top:252px;width:789px;height:1px;background:#777;"></div>
<div class="t " style="left:376px;top:232.0px;font-size:14px;line-height:14px;color:#111;font-weight:normal;">Name</div>
<div class="t " style="left:576px;top:232.0px;font-size:14px;line-height:14px;color:#111;font-weight:normal;">Size</div>
<div class="t " style="left:676px;top:232.0px;font-size:14px;line-height:14px;color:#111;font-weight:normal;">Last Modified</div>
<div class="t " style="left:876px;top:232.0px;font-size:14px;line-height:14px;color:#111;font-weight:normal;">Type</div>
<div class="t " style="left:1056px;top:232.0px;font-size:14px;line-height:14px;color:#111;font-weight:normal;">Permissions</div>
<div class="a" style="left:331px;top:905px;width:789px;height:3px;background:#f8f8f8;"></div>
<div class="a" style="left:331px;top:906px;width:748px;height:2px;background:#c8c8c8;"></div>
<div class="a" style="left:495px;top:602px;width:181px;height:306px;background:#fff;border:1px solid #cfcfcf;border-bottom:none;box-sizing:border-box;box-shadow:0 0 8px rgba(0,0,0,0.25);"></div>
<div class="t " style="left:513px;top:620.0px;font-size:14px;line-height:14px;color:#222;font-weight:normal;letter-spacing:0.15px;">Download</div>
<div class="t " style="left:513px;top:649.0px;font-size:14px;line-height:14px;color:#222;font-weight:normal;letter-spacing:0.15px;">View</div>
<div class="a" style="left:494px;top:663px;width:185px;height:45px;background:#fff;border:5px solid #f00000;box-sizing:border-box;"></div>
<div class="a" style="left:501px;top:672px;width:168px;height:29px;background:#4270d8;"></div>
<div class="t " style="left:513px;top:678.0px;font-size:14px;line-height:14px;color:#fff;font-weight:normal;letter-spacing:0.15px;">Edit</div>
<div class="t " style="left:513px;top:707.0px;font-size:14px;line-height:14px;color:#222;font-weight:normal;letter-spacing:0.15px;">Code Edit</div>
<div class="t " style="left:513px;top:736.0px;font-size:14px;line-height:14px;color:#222;font-weight:normal;letter-spacing:0.15px;">Move</div>
<div class="t " style="left:513px;top:765.0px;font-size:14px;line-height:14px;color:#222;font-weight:normal;letter-spacing:0.15px;">Copy</div>
<div class="t " style="left:513px;top:794.0px;font-size:14px;line-height:14px;color:#222;font-weight:normal;letter-spacing:0.15px;">Rename</div>
<div class="t " style="left:513px;top:823.0px;font-size:14px;line-height:14px;color:#222;font-weight:normal;letter-spacing:0.15px;">Change Permissions</div>
<div class="t " style="left:513px;top:852.0px;font-size:14px;line-height:14px;color:#222;font-weight:normal;letter-spacing:0.15px;">Delete</div>
<div class="t " style="left:513px;top:881.0px;font-size:14px;line-height:14px;color:#222;font-weight:normal;letter-spacing:0.15px;">Compress</div>
<div class="a" style="left:0px;top:904px;width:597px;height:4px;background:#f8f8f8;border-top:1px solid #c8c8c8;border-right:1px solid #c8c8c8;box-sizing:border-box;"></div>
<div class="t " style="left:1064px;top:848.0px;font-size:19px;line-height:19px;color:rgba(140,140,140,0.6);font-weight:normal;">Activate Windows</div>
<div class="t " style="left:1062px;top:872.75px;font-size:14.5px;line-height:14.5px;color:rgba(140,140,140,0.6);font-weight:normal;">Go to Settings to activate Windows.</div>
</body></html>
